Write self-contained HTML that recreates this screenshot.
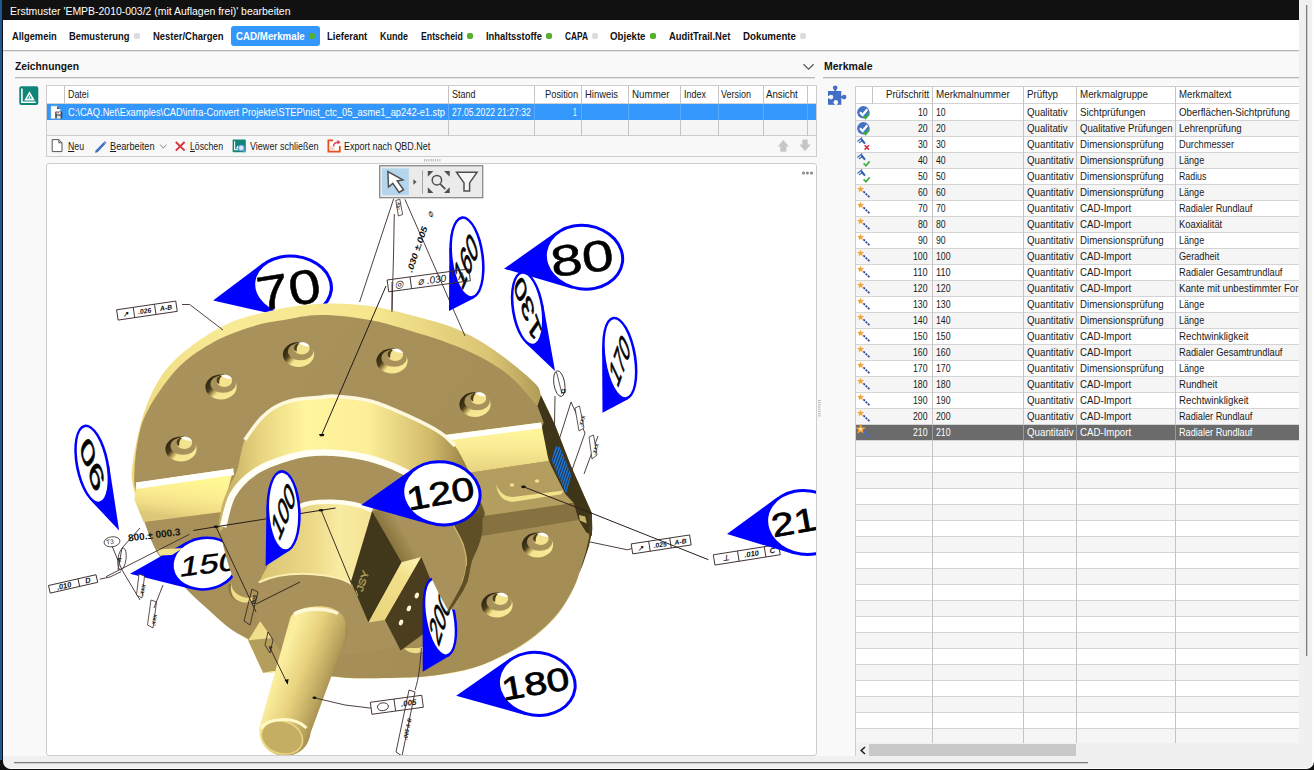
<!DOCTYPE html>
<html lang="de"><head><meta charset="utf-8"><title>Erstmuster bearbeiten</title>
<style>
html,body{margin:0;padding:0}
body{width:1314px;height:770px;overflow:hidden;position:relative;background:#101010;font-family:"Liberation Sans",sans-serif;font-size:11px;}
div,span,svg{position:absolute;box-sizing:border-box}
.t{white-space:nowrap;line-height:16px;transform-origin:0 0;display:block}
.t u{text-decoration:underline;text-underline-offset:1px}
#win{left:3px;top:0;width:1296px;height:756px;background:#f9f9f9;overflow:hidden}
.hl{height:1px;background:#d4d4d4}
.vl{width:1px;background:#c4c4c4}
.dot{width:6px;height:6px;border-radius:2px}
.dg{background:#55b02b}
.dgr{background:#dcdcdc}
</style></head><body>

<!-- outer frame -->
<div style="left:0;top:0;width:2px;height:760px;background:#1d5a93"></div>
<div style="left:3px;top:0;width:1311px;height:769px;background:#f0f0f0;border-right:2px solid #fdfdfd;border-bottom:1px solid #fdfdfd;border-radius:0 0 8px 8px"></div>
<div style="left:1306px;top:5px;width:1px;height:651px;background:#7a7a7a"></div>
<div style="left:1307px;top:5px;width:1px;height:651px;background:#cfcfcf"></div>
<div style="left:14px;top:762px;width:1074px;height:1px;background:#7a7a7a"></div>
<div style="left:14px;top:763px;width:1074px;height:1px;background:#cfcfcf"></div>
<div id="win">
  <div style="left:0;top:0;width:1296px;height:20px;background:#111111"></div>
  <div style="left:0;top:20px;width:1296px;height:30px;background:#ffffff"></div>
  <div style="left:0;top:50px;width:1296px;height:1px;background:#b4b4b4"></div>
  <div style="left:0;top:51px;width:1296px;height:1px;background:#e6e6e6"></div>
  <!-- active tab -->
  <div style="left:228px;top:26px;width:89px;height:20px;background:#3397fb;border-radius:3px"></div>
  <!-- section lines -->
  <div style="left:12px;top:77px;width:800px;height:1px;background:#b8b8b8"></div>
  <div style="left:12px;top:78px;width:800px;height:1px;background:#e4e4e4"></div>
  <div style="left:820px;top:77px;width:480px;height:1px;background:#b8b8b8"></div>
  <div style="left:820px;top:78px;width:480px;height:1px;background:#e4e4e4"></div>
  <!-- left grid -->
  <div style="left:43px;top:85px;width:771px;height:72px;background:#f8f8f8;border:1px solid #cdcdcd"></div>
  <div style="left:44px;top:86px;width:769px;height:18px;background:#ffffff"></div>
  <div style="left:44px;top:104px;width:769px;height:16px;background:#3397fb"></div>
  <div style="left:44px;top:120px;width:769px;height:15px;background:#f5f5f5"></div>
  <div class="hl" style="left:44px;top:103px;width:769px"></div>
  <div class="hl" style="left:44px;top:135px;width:769px;background:#cdcdcd"></div>
  <!-- left grid col seps -->
  <div class="vl" style="left:61px;top:86px;height:18px"></div>
  <div class="vl" style="left:445px;top:86px;height:50px"></div>
  <div class="vl" style="left:531px;top:86px;height:50px"></div>
  <div class="vl" style="left:578px;top:86px;height:50px"></div>
  <div class="vl" style="left:625px;top:86px;height:50px"></div>
  <div class="vl" style="left:677px;top:86px;height:50px"></div>
  <div class="vl" style="left:715px;top:86px;height:50px"></div>
  <div class="vl" style="left:760px;top:86px;height:50px"></div>
  <div class="vl" style="left:804px;top:86px;height:50px"></div>
  <div style="left:445px;top:104px;width:1px;height:16px;background:#5aaafc"></div>
  <div style="left:531px;top:104px;width:1px;height:16px;background:#5aaafc"></div>
  <div style="left:578px;top:104px;width:1px;height:16px;background:#5aaafc"></div>
  <div style="left:625px;top:104px;width:1px;height:16px;background:#5aaafc"></div>
  <div style="left:677px;top:104px;width:1px;height:16px;background:#5aaafc"></div>
  <div style="left:715px;top:104px;width:1px;height:16px;background:#5aaafc"></div>
  <div style="left:760px;top:104px;width:1px;height:16px;background:#5aaafc"></div>
  <div style="left:804px;top:104px;width:1px;height:16px;background:#5aaafc"></div>
  <!-- viewer panel -->
  <div style="left:43px;top:163px;width:771px;height:593px;background:#ffffff;border:1px solid #cdcdcd;border-radius:3px"></div>
  <!-- right table -->
  <div id="rt" style="left:852px;top:86px;width:444px;height:670px;background:#ffffff;border-left:1px solid #cdcdcd;border-top:1px solid #cdcdcd;overflow:hidden">
<div style="left:0;top:34px;width:444px;height:15px;background:#f5f5f5"></div>
<div style="left:0;top:66px;width:444px;height:15px;background:#f5f5f5"></div>
<div style="left:0;top:98px;width:444px;height:15px;background:#f5f5f5"></div>
<div style="left:0;top:130px;width:444px;height:15px;background:#f5f5f5"></div>
<div style="left:0;top:162px;width:444px;height:15px;background:#f5f5f5"></div>
<div style="left:0;top:194px;width:444px;height:15px;background:#f5f5f5"></div>
<div style="left:0;top:226px;width:444px;height:15px;background:#f5f5f5"></div>
<div style="left:0;top:258px;width:444px;height:15px;background:#f5f5f5"></div>
<div style="left:0;top:290px;width:444px;height:15px;background:#f5f5f5"></div>
<div style="left:0;top:322px;width:444px;height:15px;background:#f5f5f5"></div>
<div style="left:0;top:338px;width:444px;height:15px;background:#6b6b6b"></div>
<div style="left:0;top:354px;width:444px;height:15px;background:#f5f5f5"></div>
<div style="left:0;top:386px;width:444px;height:15px;background:#f5f5f5"></div>
<div style="left:0;top:418px;width:444px;height:15px;background:#f5f5f5"></div>
<div style="left:0;top:450px;width:444px;height:15px;background:#f5f5f5"></div>
<div style="left:0;top:482px;width:444px;height:15px;background:#f5f5f5"></div>
<div style="left:0;top:514px;width:444px;height:15px;background:#f5f5f5"></div>
<div style="left:0;top:546px;width:444px;height:15px;background:#f5f5f5"></div>
<div style="left:0;top:578px;width:444px;height:15px;background:#f5f5f5"></div>
<div style="left:0;top:610px;width:444px;height:15px;background:#f5f5f5"></div>
<div style="left:0;top:642px;width:444px;height:15px;background:#f5f5f5"></div>
<div class="hl" style="left:0;top:16px;width:444px"></div>
<div class="hl" style="left:0;top:33px;width:444px"></div>
<div class="hl" style="left:0;top:49px;width:444px"></div>
<div class="hl" style="left:0;top:65px;width:444px"></div>
<div class="hl" style="left:0;top:81px;width:444px"></div>
<div class="hl" style="left:0;top:97px;width:444px"></div>
<div class="hl" style="left:0;top:113px;width:444px"></div>
<div class="hl" style="left:0;top:129px;width:444px"></div>
<div class="hl" style="left:0;top:145px;width:444px"></div>
<div class="hl" style="left:0;top:161px;width:444px"></div>
<div class="hl" style="left:0;top:177px;width:444px"></div>
<div class="hl" style="left:0;top:193px;width:444px"></div>
<div class="hl" style="left:0;top:209px;width:444px"></div>
<div class="hl" style="left:0;top:225px;width:444px"></div>
<div class="hl" style="left:0;top:241px;width:444px"></div>
<div class="hl" style="left:0;top:257px;width:444px"></div>
<div class="hl" style="left:0;top:273px;width:444px"></div>
<div class="hl" style="left:0;top:289px;width:444px"></div>
<div class="hl" style="left:0;top:305px;width:444px"></div>
<div class="hl" style="left:0;top:321px;width:444px"></div>
<div class="hl" style="left:0;top:337px;width:444px"></div>
<div class="hl" style="left:0;top:353px;width:444px"></div>
<div class="hl" style="left:0;top:369px;width:444px"></div>
<div class="hl" style="left:0;top:385px;width:444px"></div>
<div class="hl" style="left:0;top:401px;width:444px"></div>
<div class="hl" style="left:0;top:417px;width:444px"></div>
<div class="hl" style="left:0;top:433px;width:444px"></div>
<div class="hl" style="left:0;top:449px;width:444px"></div>
<div class="hl" style="left:0;top:465px;width:444px"></div>
<div class="hl" style="left:0;top:481px;width:444px"></div>
<div class="hl" style="left:0;top:497px;width:444px"></div>
<div class="hl" style="left:0;top:513px;width:444px"></div>
<div class="hl" style="left:0;top:529px;width:444px"></div>
<div class="hl" style="left:0;top:545px;width:444px"></div>
<div class="hl" style="left:0;top:561px;width:444px"></div>
<div class="hl" style="left:0;top:577px;width:444px"></div>
<div class="hl" style="left:0;top:593px;width:444px"></div>
<div class="hl" style="left:0;top:609px;width:444px"></div>
<div class="hl" style="left:0;top:625px;width:444px"></div>
<div class="hl" style="left:0;top:641px;width:444px"></div>
<div class="vl" style="left:16px;top:0;height:17px"></div>
<div class="vl" style="left:76px;top:0;height:656px"></div>
<div style="left:76px;top:338px;width:1px;height:15px;background:#9a9a9a"></div>
<div class="vl" style="left:167px;top:0;height:656px"></div>
<div style="left:167px;top:338px;width:1px;height:15px;background:#9a9a9a"></div>
<div class="vl" style="left:220px;top:0;height:656px"></div>
<div style="left:220px;top:338px;width:1px;height:15px;background:#9a9a9a"></div>
<div class="vl" style="left:319px;top:0;height:656px"></div>
<div style="left:319px;top:338px;width:1px;height:15px;background:#9a9a9a"></div>
<div style="left:0;top:656px;width:444px;height:14px;background:#f0f0f0"></div>
<div style="left:13px;top:657px;width:207px;height:12px;background:#c9c9c9"></div>
<svg style="left:3px;top:659px" width="8" height="9" viewBox="0 0 8 9"><path d="M6 1 L2.2 4.5 L6 8" fill="none" stroke="#222" stroke-width="1.6"/></svg>
  </div>
</div>

<div id="txt" style="left:0;top:0;width:1299px;height:770px;overflow:hidden">
<span class="t" style="left:10.0px;top:3.02px;font-size:11.5px;color:#ffffff;transform:scaleX(0.9088);">Erstmuster &#x27;EMPB-2010-003/2 (mit Auflagen frei)&#x27; bearbeiten</span>
<span class="t" style="left:12.0px;top:27.86px;font-size:10.8px;color:#111111;font-weight:700;transform:scaleX(0.8661);">Allgemein</span>
<span class="t" style="left:69.0px;top:27.86px;font-size:10.8px;color:#111111;font-weight:700;transform:scaleX(0.8693);">Bemusterung</span>
<span class="t" style="left:152.5px;top:27.86px;font-size:10.8px;color:#111111;font-weight:700;transform:scaleX(0.8768);">Nester/Chargen</span>
<span class="t" style="left:235.7px;top:27.86px;font-size:10.8px;color:#ffffff;font-weight:700;transform:scaleX(0.9027);">CAD/Merkmale</span>
<span class="t" style="left:326.7px;top:27.86px;font-size:10.8px;color:#111111;font-weight:700;transform:scaleX(0.8836);">Lieferant</span>
<span class="t" style="left:380.0px;top:27.86px;font-size:10.8px;color:#111111;font-weight:700;transform:scaleX(0.8335);">Kunde</span>
<span class="t" style="left:420.7px;top:27.86px;font-size:10.8px;color:#111111;font-weight:700;transform:scaleX(0.8099);">Entscheid</span>
<span class="t" style="left:485.7px;top:27.86px;font-size:10.8px;color:#111111;font-weight:700;transform:scaleX(0.8724);">Inhaltsstoffe</span>
<span class="t" style="left:564.5px;top:27.86px;font-size:10.8px;color:#111111;font-weight:700;transform:scaleX(0.7719);">CAPA</span>
<span class="t" style="left:610.0px;top:27.86px;font-size:10.8px;color:#111111;font-weight:700;transform:scaleX(0.8963);">Objekte</span>
<span class="t" style="left:668.7px;top:27.86px;font-size:10.8px;color:#111111;font-weight:700;transform:scaleX(0.8734);">AuditTrail.Net</span>
<span class="t" style="left:742.5px;top:27.86px;font-size:10.8px;color:#111111;font-weight:700;transform:scaleX(0.9014);">Dokumente</span>
<span class="t" style="left:15.0px;top:58.18px;font-size:11.6px;color:#111111;font-weight:700;transform:scaleX(0.8872);">Zeichnungen</span>
<span class="t" style="left:824.0px;top:58.18px;font-size:11.6px;color:#111111;font-weight:700;transform:scaleX(0.9065);">Merkmale</span>
<span class="t" style="left:68.0px;top:86.49px;font-size:11px;color:#1a1a1a;transform:scaleX(0.8058);">Datei</span>
<span class="t" style="left:452.0px;top:86.49px;font-size:11px;color:#1a1a1a;transform:scaleX(0.8174);">Stand</span>
<span class="t" style="left:545.0px;top:86.49px;font-size:11px;color:#1a1a1a;transform:scaleX(0.8482);">Position</span>
<span class="t" style="left:585.0px;top:86.49px;font-size:11px;color:#1a1a1a;transform:scaleX(0.8568);">Hinweis</span>
<span class="t" style="left:632.0px;top:86.49px;font-size:11px;color:#1a1a1a;transform:scaleX(0.8892);">Nummer</span>
<span class="t" style="left:683.7px;top:86.49px;font-size:11px;color:#1a1a1a;transform:scaleX(0.8172);">Index</span>
<span class="t" style="left:721.2px;top:86.49px;font-size:11px;color:#1a1a1a;transform:scaleX(0.8174);">Version</span>
<span class="t" style="left:766.2px;top:86.49px;font-size:11px;color:#1a1a1a;transform:scaleX(0.8814);">Ansicht</span>
<span class="t" style="left:68.0px;top:103.99px;font-size:11px;color:#ffffff;transform:scaleX(0.8459);">C:\CAQ.Net\Examples\CAD\infra-Convert Projekte\STEP\nist_ctc_05_asme1_ap242-e1.stp</span>
<span class="t" style="left:452.0px;top:103.99px;font-size:11px;color:#ffffff;transform:scaleX(0.7797);">27.05.2022 21:27:32</span>
<span class="t" style="left:572.5px;top:103.99px;font-size:11px;color:#ffffff;transform:scaleX(0.6041);">1</span>
<span class="t" style="left:68.0px;top:138.39px;font-size:11px;color:#1a1a1a;transform:scaleX(0.7920);"><u>N</u>eu</span>
<span class="t" style="left:110.0px;top:138.39px;font-size:11px;color:#1a1a1a;transform:scaleX(0.8362);"><u>B</u>earbeiten</span>
<span class="t" style="left:190.0px;top:138.39px;font-size:11px;color:#1a1a1a;transform:scaleX(0.7931);"><u>L</u>öschen</span>
<span class="t" style="left:249.5px;top:138.39px;font-size:11px;color:#1a1a1a;transform:scaleX(0.8197);">Viewer schließen</span>
<span class="t" style="left:343.7px;top:138.39px;font-size:11px;color:#1a1a1a;transform:scaleX(0.8158);">Export nach QBD.Net</span>
<span class="t" style="left:886.2px;top:86.49px;font-size:11px;color:#1a1a1a;transform:scaleX(0.8745);">Prüfschritt</span>
<span class="t" style="left:936.2px;top:86.49px;font-size:11px;color:#1a1a1a;transform:scaleX(0.8944);">Merkmalnummer</span>
<span class="t" style="left:1026.5px;top:86.49px;font-size:11px;color:#1a1a1a;transform:scaleX(0.8893);">Prüftyp</span>
<span class="t" style="left:1080.0px;top:86.49px;font-size:11px;color:#1a1a1a;transform:scaleX(0.8898);">Merkmalgruppe</span>
<span class="t" style="left:1179.0px;top:86.49px;font-size:11px;color:#1a1a1a;transform:scaleX(0.8764);">Merkmaltext</span>
<span class="t" style="left:918.3px;top:103.99px;font-size:11px;color:#1a1a1a;transform:scaleX(0.7918);">10</span>
<span class="t" style="left:935.8px;top:103.99px;font-size:11px;color:#1a1a1a;transform:scaleX(0.7918);">10</span>
<span class="t" style="left:1026.5px;top:103.99px;font-size:11px;color:#1a1a1a;transform:scaleX(0.8831);">Qualitativ</span>
<span class="t" style="left:1080.0px;top:103.99px;font-size:11px;color:#1a1a1a;transform:scaleX(0.8851);">Sichtprüfungen</span>
<span class="t" style="left:1179.0px;top:103.99px;font-size:11px;color:#1a1a1a;transform:scaleX(0.8855);">Oberflächen-Sichtprüfung</span>
<span class="t" style="left:918.3px;top:119.79px;font-size:11px;color:#1a1a1a;transform:scaleX(0.7918);">20</span>
<span class="t" style="left:935.8px;top:119.79px;font-size:11px;color:#1a1a1a;transform:scaleX(0.7918);">20</span>
<span class="t" style="left:1026.5px;top:119.79px;font-size:11px;color:#1a1a1a;transform:scaleX(0.8831);">Qualitativ</span>
<span class="t" style="left:1080.0px;top:119.79px;font-size:11px;color:#1a1a1a;transform:scaleX(0.8743);">Qualitative Prüfungen</span>
<span class="t" style="left:1179.0px;top:119.79px;font-size:11px;color:#1a1a1a;transform:scaleX(0.8762);">Lehrenprüfung</span>
<span class="t" style="left:918.3px;top:135.79px;font-size:11px;color:#1a1a1a;transform:scaleX(0.7918);">30</span>
<span class="t" style="left:935.8px;top:135.79px;font-size:11px;color:#1a1a1a;transform:scaleX(0.7918);">30</span>
<span class="t" style="left:1026.5px;top:135.79px;font-size:11px;color:#1a1a1a;transform:scaleX(0.8841);">Quantitativ</span>
<span class="t" style="left:1080.0px;top:135.79px;font-size:11px;color:#1a1a1a;transform:scaleX(0.8831);">Dimensionsprüfung</span>
<span class="t" style="left:1179.0px;top:135.79px;font-size:11px;color:#1a1a1a;transform:scaleX(0.8409);">Durchmesser</span>
<span class="t" style="left:918.3px;top:151.79px;font-size:11px;color:#1a1a1a;transform:scaleX(0.7918);">40</span>
<span class="t" style="left:935.8px;top:151.79px;font-size:11px;color:#1a1a1a;transform:scaleX(0.7918);">40</span>
<span class="t" style="left:1026.5px;top:151.79px;font-size:11px;color:#1a1a1a;transform:scaleX(0.8841);">Quantitativ</span>
<span class="t" style="left:1080.0px;top:151.79px;font-size:11px;color:#1a1a1a;transform:scaleX(0.8831);">Dimensionsprüfung</span>
<span class="t" style="left:1179.0px;top:151.79px;font-size:11px;color:#1a1a1a;transform:scaleX(0.8237);">Länge</span>
<span class="t" style="left:918.3px;top:167.79px;font-size:11px;color:#1a1a1a;transform:scaleX(0.7918);">50</span>
<span class="t" style="left:935.8px;top:167.79px;font-size:11px;color:#1a1a1a;transform:scaleX(0.7918);">50</span>
<span class="t" style="left:1026.5px;top:167.79px;font-size:11px;color:#1a1a1a;transform:scaleX(0.8841);">Quantitativ</span>
<span class="t" style="left:1080.0px;top:167.79px;font-size:11px;color:#1a1a1a;transform:scaleX(0.8831);">Dimensionsprüfung</span>
<span class="t" style="left:1179.0px;top:167.79px;font-size:11px;color:#1a1a1a;transform:scaleX(0.8000);">Radius</span>
<span class="t" style="left:918.3px;top:183.79px;font-size:11px;color:#1a1a1a;transform:scaleX(0.7918);">60</span>
<span class="t" style="left:935.8px;top:183.79px;font-size:11px;color:#1a1a1a;transform:scaleX(0.7918);">60</span>
<span class="t" style="left:1026.5px;top:183.79px;font-size:11px;color:#1a1a1a;transform:scaleX(0.8841);">Quantitativ</span>
<span class="t" style="left:1080.0px;top:183.79px;font-size:11px;color:#1a1a1a;transform:scaleX(0.8831);">Dimensionsprüfung</span>
<span class="t" style="left:1179.0px;top:183.79px;font-size:11px;color:#1a1a1a;transform:scaleX(0.8237);">Länge</span>
<span class="t" style="left:918.3px;top:199.79px;font-size:11px;color:#1a1a1a;transform:scaleX(0.7918);">70</span>
<span class="t" style="left:935.8px;top:199.79px;font-size:11px;color:#1a1a1a;transform:scaleX(0.7918);">70</span>
<span class="t" style="left:1026.5px;top:199.79px;font-size:11px;color:#1a1a1a;transform:scaleX(0.8841);">Quantitativ</span>
<span class="t" style="left:1080.0px;top:199.79px;font-size:11px;color:#1a1a1a;transform:scaleX(0.8801);">CAD-Import</span>
<span class="t" style="left:1179.0px;top:199.79px;font-size:11px;color:#1a1a1a;transform:scaleX(0.8324);">Radialer Rundlauf</span>
<span class="t" style="left:918.3px;top:215.79px;font-size:11px;color:#1a1a1a;transform:scaleX(0.7918);">80</span>
<span class="t" style="left:935.8px;top:215.79px;font-size:11px;color:#1a1a1a;transform:scaleX(0.7918);">80</span>
<span class="t" style="left:1026.5px;top:215.79px;font-size:11px;color:#1a1a1a;transform:scaleX(0.8841);">Quantitativ</span>
<span class="t" style="left:1080.0px;top:215.79px;font-size:11px;color:#1a1a1a;transform:scaleX(0.8801);">CAD-Import</span>
<span class="t" style="left:1179.0px;top:215.79px;font-size:11px;color:#1a1a1a;transform:scaleX(0.8510);">Koaxialität</span>
<span class="t" style="left:918.3px;top:231.79px;font-size:11px;color:#1a1a1a;transform:scaleX(0.7918);">90</span>
<span class="t" style="left:935.8px;top:231.79px;font-size:11px;color:#1a1a1a;transform:scaleX(0.7918);">90</span>
<span class="t" style="left:1026.5px;top:231.79px;font-size:11px;color:#1a1a1a;transform:scaleX(0.8841);">Quantitativ</span>
<span class="t" style="left:1080.0px;top:231.79px;font-size:11px;color:#1a1a1a;transform:scaleX(0.8831);">Dimensionsprüfung</span>
<span class="t" style="left:1179.0px;top:231.79px;font-size:11px;color:#1a1a1a;transform:scaleX(0.8237);">Länge</span>
<span class="t" style="left:913.4px;top:247.79px;font-size:11px;color:#1a1a1a;transform:scaleX(0.7952);">100</span>
<span class="t" style="left:935.8px;top:247.79px;font-size:11px;color:#1a1a1a;transform:scaleX(0.7952);">100</span>
<span class="t" style="left:1026.5px;top:247.79px;font-size:11px;color:#1a1a1a;transform:scaleX(0.8841);">Quantitativ</span>
<span class="t" style="left:1080.0px;top:247.79px;font-size:11px;color:#1a1a1a;transform:scaleX(0.8801);">CAD-Import</span>
<span class="t" style="left:1179.0px;top:247.79px;font-size:11px;color:#1a1a1a;transform:scaleX(0.8321);">Geradheit</span>
<span class="t" style="left:913.4px;top:263.79px;font-size:11px;color:#1a1a1a;transform:scaleX(0.8321);">110</span>
<span class="t" style="left:935.8px;top:263.79px;font-size:11px;color:#1a1a1a;transform:scaleX(0.8321);">110</span>
<span class="t" style="left:1026.5px;top:263.79px;font-size:11px;color:#1a1a1a;transform:scaleX(0.8841);">Quantitativ</span>
<span class="t" style="left:1080.0px;top:263.79px;font-size:11px;color:#1a1a1a;transform:scaleX(0.8801);">CAD-Import</span>
<span class="t" style="left:1179.0px;top:263.79px;font-size:11px;color:#1a1a1a;transform:scaleX(0.8455);">Radialer Gesamtrundlauf</span>
<span class="t" style="left:913.4px;top:279.79px;font-size:11px;color:#1a1a1a;transform:scaleX(0.7952);">120</span>
<span class="t" style="left:935.8px;top:279.79px;font-size:11px;color:#1a1a1a;transform:scaleX(0.7952);">120</span>
<span class="t" style="left:1026.5px;top:279.79px;font-size:11px;color:#1a1a1a;transform:scaleX(0.8841);">Quantitativ</span>
<span class="t" style="left:1080.0px;top:279.79px;font-size:11px;color:#1a1a1a;transform:scaleX(0.8801);">CAD-Import</span>
<span class="t" style="left:1179.0px;top:279.79px;font-size:11px;color:#1a1a1a;transform:scaleX(0.8801);">Kante mit unbestimmter Form</span>
<span class="t" style="left:913.4px;top:295.79px;font-size:11px;color:#1a1a1a;transform:scaleX(0.7952);">130</span>
<span class="t" style="left:935.8px;top:295.79px;font-size:11px;color:#1a1a1a;transform:scaleX(0.7952);">130</span>
<span class="t" style="left:1026.5px;top:295.79px;font-size:11px;color:#1a1a1a;transform:scaleX(0.8841);">Quantitativ</span>
<span class="t" style="left:1080.0px;top:295.79px;font-size:11px;color:#1a1a1a;transform:scaleX(0.8831);">Dimensionsprüfung</span>
<span class="t" style="left:1179.0px;top:295.79px;font-size:11px;color:#1a1a1a;transform:scaleX(0.8237);">Länge</span>
<span class="t" style="left:913.4px;top:311.79px;font-size:11px;color:#1a1a1a;transform:scaleX(0.7952);">140</span>
<span class="t" style="left:935.8px;top:311.79px;font-size:11px;color:#1a1a1a;transform:scaleX(0.7952);">140</span>
<span class="t" style="left:1026.5px;top:311.79px;font-size:11px;color:#1a1a1a;transform:scaleX(0.8841);">Quantitativ</span>
<span class="t" style="left:1080.0px;top:311.79px;font-size:11px;color:#1a1a1a;transform:scaleX(0.8831);">Dimensionsprüfung</span>
<span class="t" style="left:1179.0px;top:311.79px;font-size:11px;color:#1a1a1a;transform:scaleX(0.8237);">Länge</span>
<span class="t" style="left:913.4px;top:327.79px;font-size:11px;color:#1a1a1a;transform:scaleX(0.7952);">150</span>
<span class="t" style="left:935.8px;top:327.79px;font-size:11px;color:#1a1a1a;transform:scaleX(0.7952);">150</span>
<span class="t" style="left:1026.5px;top:327.79px;font-size:11px;color:#1a1a1a;transform:scaleX(0.8841);">Quantitativ</span>
<span class="t" style="left:1080.0px;top:327.79px;font-size:11px;color:#1a1a1a;transform:scaleX(0.8801);">CAD-Import</span>
<span class="t" style="left:1179.0px;top:327.79px;font-size:11px;color:#1a1a1a;transform:scaleX(0.8811);">Rechtwinkligkeit</span>
<span class="t" style="left:913.4px;top:343.79px;font-size:11px;color:#1a1a1a;transform:scaleX(0.7952);">160</span>
<span class="t" style="left:935.8px;top:343.79px;font-size:11px;color:#1a1a1a;transform:scaleX(0.7952);">160</span>
<span class="t" style="left:1026.5px;top:343.79px;font-size:11px;color:#1a1a1a;transform:scaleX(0.8841);">Quantitativ</span>
<span class="t" style="left:1080.0px;top:343.79px;font-size:11px;color:#1a1a1a;transform:scaleX(0.8801);">CAD-Import</span>
<span class="t" style="left:1179.0px;top:343.79px;font-size:11px;color:#1a1a1a;transform:scaleX(0.8455);">Radialer Gesamtrundlauf</span>
<span class="t" style="left:913.4px;top:359.79px;font-size:11px;color:#1a1a1a;transform:scaleX(0.7952);">170</span>
<span class="t" style="left:935.8px;top:359.79px;font-size:11px;color:#1a1a1a;transform:scaleX(0.7952);">170</span>
<span class="t" style="left:1026.5px;top:359.79px;font-size:11px;color:#1a1a1a;transform:scaleX(0.8841);">Quantitativ</span>
<span class="t" style="left:1080.0px;top:359.79px;font-size:11px;color:#1a1a1a;transform:scaleX(0.8831);">Dimensionsprüfung</span>
<span class="t" style="left:1179.0px;top:359.79px;font-size:11px;color:#1a1a1a;transform:scaleX(0.8237);">Länge</span>
<span class="t" style="left:913.4px;top:375.79px;font-size:11px;color:#1a1a1a;transform:scaleX(0.7952);">180</span>
<span class="t" style="left:935.8px;top:375.79px;font-size:11px;color:#1a1a1a;transform:scaleX(0.7952);">180</span>
<span class="t" style="left:1026.5px;top:375.79px;font-size:11px;color:#1a1a1a;transform:scaleX(0.8841);">Quantitativ</span>
<span class="t" style="left:1080.0px;top:375.79px;font-size:11px;color:#1a1a1a;transform:scaleX(0.8801);">CAD-Import</span>
<span class="t" style="left:1179.0px;top:375.79px;font-size:11px;color:#1a1a1a;transform:scaleX(0.8695);">Rundheit</span>
<span class="t" style="left:913.4px;top:391.79px;font-size:11px;color:#1a1a1a;transform:scaleX(0.7952);">190</span>
<span class="t" style="left:935.8px;top:391.79px;font-size:11px;color:#1a1a1a;transform:scaleX(0.7952);">190</span>
<span class="t" style="left:1026.5px;top:391.79px;font-size:11px;color:#1a1a1a;transform:scaleX(0.8841);">Quantitativ</span>
<span class="t" style="left:1080.0px;top:391.79px;font-size:11px;color:#1a1a1a;transform:scaleX(0.8801);">CAD-Import</span>
<span class="t" style="left:1179.0px;top:391.79px;font-size:11px;color:#1a1a1a;transform:scaleX(0.8811);">Rechtwinkligkeit</span>
<span class="t" style="left:913.4px;top:407.79px;font-size:11px;color:#1a1a1a;transform:scaleX(0.7952);">200</span>
<span class="t" style="left:935.8px;top:407.79px;font-size:11px;color:#1a1a1a;transform:scaleX(0.7952);">200</span>
<span class="t" style="left:1026.5px;top:407.79px;font-size:11px;color:#1a1a1a;transform:scaleX(0.8841);">Quantitativ</span>
<span class="t" style="left:1080.0px;top:407.79px;font-size:11px;color:#1a1a1a;transform:scaleX(0.8801);">CAD-Import</span>
<span class="t" style="left:1179.0px;top:407.79px;font-size:11px;color:#1a1a1a;transform:scaleX(0.8324);">Radialer Rundlauf</span>
<span class="t" style="left:913.4px;top:423.79px;font-size:11px;color:#ffffff;transform:scaleX(0.7952);">210</span>
<span class="t" style="left:935.8px;top:423.79px;font-size:11px;color:#ffffff;transform:scaleX(0.7952);">210</span>
<span class="t" style="left:1026.5px;top:423.79px;font-size:11px;color:#ffffff;transform:scaleX(0.8841);">Quantitativ</span>
<span class="t" style="left:1080.0px;top:423.79px;font-size:11px;color:#ffffff;transform:scaleX(0.8801);">CAD-Import</span>
<span class="t" style="left:1179.0px;top:423.79px;font-size:11px;color:#ffffff;transform:scaleX(0.8324);">Radialer Rundlauf</span>
</div>
<div class="dot dgr" style="left:134px;top:33px"></div>
<div class="dot dg" style="left:308.5px;top:33px"></div>
<div class="dot dg" style="left:467px;top:33px"></div>
<div class="dot dg" style="left:546px;top:33px"></div>
<div class="dot dgr" style="left:592px;top:33px"></div>
<div class="dot dg" style="left:650px;top:33px"></div>
<div class="dot dgr" style="left:800px;top:33px"></div>
<svg style="left:802px;top:62px" width="14" height="10" viewBox="0 0 14 10"><path d="M1.5 2.2 L6.6 7.2 L11.7 2.2" fill="none" stroke="#555" stroke-width="1.2"/></svg>
<svg style="left:19px;top:85.5px" width="20" height="20" viewBox="0 0 20 20"><rect x="0.3" y="0.3" width="19" height="18.8" rx="2" fill="#0f8578"/><path d="M2.9 2.5 V16.3 H16.8" fill="none" stroke="#fff" stroke-width="1.6"/><path d="M10.5 5.2 L15.8 14.4 H5.2Z" fill="#fff"/><path d="M10.5 8.6 L12.9 12.8 H8.1Z" fill="#0f8578"/><path d="M10.5 10 V12.5 M9.3 12 L11.7 12" stroke="#fff" stroke-width="0.8"/></svg>
<svg style="left:826px;top:84px" width="22" height="22" viewBox="826 84 22 22"><rect x="828" y="91" width="13.3" height="13.8" fill="#416fc6"/><circle cx="835.2" cy="87.7" r="2.3" fill="#416fc6"/><rect x="834.3" y="88.5" width="1.9" height="3" fill="#416fc6"/><circle cx="844.1" cy="97.1" r="2.3" fill="#416fc6"/><rect x="841" y="96.2" width="2.5" height="1.9" fill="#416fc6"/><circle cx="831" cy="97.1" r="2.3" fill="#f9f9f9"/><rect x="827.8" y="96" width="2.2" height="2.2" fill="#f9f9f9"/><circle cx="835.8" cy="102.3" r="2.3" fill="#f9f9f9"/><rect x="834.9" y="103.4" width="1.9" height="1.6" fill="#f9f9f9"/></svg>
<svg style="left:49px;top:105px" width="15" height="15" viewBox="0 0 15 15"><path d="M2 1 H8 L11.2 4 V13.6 H2Z" fill="#fff" stroke="#c9c0b0" stroke-width="0.6"/><path d="M8 1 L11.2 4 H8Z" fill="#555"/><rect x="6.2" y="6.6" width="7" height="7" rx="0.8" fill="#3c4650"/><rect x="7.6" y="6.8" width="4" height="2.6" fill="#fff"/><rect x="8" y="7.3" width="2.4" height="1" fill="#d33"/><rect x="7.8" y="10.6" width="3.8" height="3" fill="#e8e8e8"/></svg>
<svg style="left:50px;top:138px" width="15" height="15" viewBox="0 0 15 15"><path d="M2.2 1.6 H8.8 L12 4.8 V13.6 H2.2Z" fill="#fff" stroke="#555" stroke-width="1"/><path d="M8.8 1.6 V4.8 H12" fill="none" stroke="#555" stroke-width="1"/></svg>
<svg style="left:93px;top:139px" width="15" height="14" viewBox="0 0 15 14"><path d="M2.6 11.6 L10.6 3.2 L12.4 5 L4.6 13.2 L2 13.8Z" fill="#4472c4"/><path d="M10.6 3.2 L11.8 2 L13.6 3.8 L12.4 5Z" fill="#6a8fd8"/></svg>
<svg style="left:159px;top:143px" width="10" height="8" viewBox="0 0 10 8"><path d="M1.2 1.6 L4.2 5.2 L7.4 1.6" fill="none" stroke="#8a8a8a" stroke-width="1"/></svg>
<svg style="left:174px;top:139.5px" width="13" height="13" viewBox="0 0 13 13"><path d="M1.8 2 L10.6 10.6 M10.6 2 L1.8 10.6" stroke="#d8353d" stroke-width="1.9" fill="none"/></svg>
<svg style="left:232px;top:138.5px" width="15" height="14" viewBox="0 0 15 14"><rect x="0.6" y="0.6" width="13.2" height="12.6" rx="1" fill="#0f8578"/><path d="M2.6 2.2 V10.8 H6" fill="none" stroke="#fff" stroke-width="1.1"/><path d="M4 9.5 L5.6 6.4 L7.2 9.5Z" fill="#fff"/><circle cx="9.3" cy="9" r="2.7" fill="#dbe8fb" stroke="#7aa7ee" stroke-width="1.1"/><path d="M11.3 11 L13.4 13.2" stroke="#7aa7ee" stroke-width="1.4"/></svg>
<svg style="left:326.5px;top:138px" width="15" height="15" viewBox="0 0 15 15"><rect x="1.4" y="2.4" width="11.4" height="11.2" fill="#fff" stroke="#e8501e" stroke-width="1.8"/><rect x="6" y="1" width="8" height="7" fill="#fff" opacity="0.95"/><path d="M6.4 8.4 C6.6 5.6 8.6 4.2 11.4 4.2" fill="none" stroke="#e0405a" stroke-width="1.4"/><path d="M10.4 1.8 L13.6 4.2 L10.4 6.6Z" fill="#e0405a"/><rect x="3" y="8.4" width="4.4" height="4" fill="#fbd3c5"/></svg>
<svg style="left:776px;top:138px" width="36" height="16" viewBox="0 0 36 16"><path d="M7.3 1.9 L13 8.4 H10.4 V13.7 H4.3 V8.4 H1.6Z" fill="#c6c6c6"/><path d="M26.3 1.5 H31.7 V6.5 H34.7 L29 13.3 L23.3 6.5 H26.3Z" fill="#c6c6c6"/></svg>
<svg style="left:800px;top:170px" width="16" height="6" viewBox="0 0 16 6"><circle cx="3.5" cy="3" r="1.55" fill="#8c8c8c"/><circle cx="7.4" cy="3" r="1.55" fill="#8c8c8c"/><circle cx="11.5" cy="3" r="1.55" fill="#8c8c8c"/></svg>
<svg style="left:424px;top:158.8px" width="18" height="3" viewBox="0 0 18 3"><rect x="0.0" y="0" width="1" height="2.6" fill="#b4b4b4"/><rect x="2.2" y="0" width="1" height="2.6" fill="#b4b4b4"/><rect x="4.4" y="0" width="1" height="2.6" fill="#b4b4b4"/><rect x="6.6" y="0" width="1" height="2.6" fill="#b4b4b4"/><rect x="8.8" y="0" width="1" height="2.6" fill="#b4b4b4"/><rect x="11.0" y="0" width="1" height="2.6" fill="#b4b4b4"/><rect x="13.2" y="0" width="1" height="2.6" fill="#b4b4b4"/><rect x="15.4" y="0" width="1" height="2.6" fill="#b4b4b4"/></svg>
<svg style="left:817.5px;top:400px" width="3" height="18" viewBox="0 0 3 18"><rect x="0" y="0.0" width="2.6" height="1" fill="#b4b4b4"/><rect x="0" y="2.2" width="2.6" height="1" fill="#b4b4b4"/><rect x="0" y="4.4" width="2.6" height="1" fill="#b4b4b4"/><rect x="0" y="6.6" width="2.6" height="1" fill="#b4b4b4"/><rect x="0" y="8.8" width="2.6" height="1" fill="#b4b4b4"/><rect x="0" y="11.0" width="2.6" height="1" fill="#b4b4b4"/><rect x="0" y="13.2" width="2.6" height="1" fill="#b4b4b4"/><rect x="0" y="15.4" width="2.6" height="1" fill="#b4b4b4"/></svg>
<svg style="left:379.2px;top:165.2px" width="105" height="34" viewBox="0 0 105 34"><rect x="0.7" y="0.7" width="103" height="32" fill="#ebebeb" stroke="#8a8a8a" stroke-width="1.3"/><rect x="3" y="3.4" width="26.8" height="26.8" fill="#b4d5ec"/><path d="M8.9 6.6 L9.5 22 L13.8 18.4 L20.1 27.4 L24.5 24.7 L18.2 15.9 L23.8 14.9Z" fill="#fff" stroke="#4f4f4f" stroke-width="1.5" stroke-linejoin="miter"/><path d="M34.4 14.2 L37.6 17 L34.4 19.8Z" fill="#555"/><path d="M43.5 5.5 V29.2" stroke="#a6a6a6" stroke-width="1"/><path d="M48.8 6 H54.4 L48.8 11.7Z M70.7 6 V11.7 L65 6Z M48.8 27.9 V22.3 L54.4 27.9Z M70.7 27.9 H65 L70.7 22.3Z" fill="#4f4f4f"/><circle cx="57.9" cy="15.2" r="4.7" fill="none" stroke="#4f4f4f" stroke-width="1.5"/><path d="M61.3 19.1 L66.3 24.1" stroke="#4f4f4f" stroke-width="1.8"/><path d="M77.5 7.3 H98.1 L90.6 17.9 V26 H85 V17.9Z" fill="#f6f6f6" stroke="#4f4f4f" stroke-width="1.5"/></svg>
<svg style="left:856px;top:104px" width="16" height="16" viewBox="0 0 16 16"><circle cx="7.4" cy="8.3" r="6.2" fill="#4472c4"/><path d="M4 8.2 L6.6 11 L11.4 5.2" fill="none" stroke="#fff" stroke-width="2.2"/><path d="M7.4 12.2 L9.6 14.4 L13.4 9.6" fill="none" stroke="#3cb043" stroke-width="1.7"/></svg>
<svg style="left:856px;top:120px" width="16" height="16" viewBox="0 0 16 16"><circle cx="7.4" cy="8.3" r="6.2" fill="#4472c4"/><path d="M4 8.2 L6.6 11 L11.4 5.2" fill="none" stroke="#fff" stroke-width="2.2"/><path d="M7.4 12.2 L9.6 14.4 L13.4 9.6" fill="none" stroke="#3cb043" stroke-width="1.7"/></svg>
<svg style="left:856px;top:136px" width="16" height="16" viewBox="0 0 16 16"><path d="M1.4 5.4 L6.2 1.6 M3 7 L7 3.8 M6 3.4 L8.8 7.4 L5.6 4.6" stroke="#4472c4" stroke-width="1.3" fill="none"/><path d="M5.2 3.2 L9 7.6" stroke="#3a62b0" stroke-width="1.8"/><path d="M8.6 9.2 L13 13.6 M13 9.2 L8.6 13.6" stroke="#d8353d" stroke-width="1.6"/></svg>
<svg style="left:856px;top:152px" width="16" height="16" viewBox="0 0 16 16"><path d="M1.4 5.4 L6.2 1.6 M3 7 L7 3.8 M6 3.4 L8.8 7.4 L5.6 4.6" stroke="#4472c4" stroke-width="1.3" fill="none"/><path d="M5.2 3.2 L9 7.6" stroke="#3a62b0" stroke-width="1.8"/><path d="M7.6 11.4 L10 13.8 L13.6 9.4" fill="none" stroke="#3cb043" stroke-width="1.7"/></svg>
<svg style="left:856px;top:168px" width="16" height="16" viewBox="0 0 16 16"><path d="M1.4 5.4 L6.2 1.6 M3 7 L7 3.8 M6 3.4 L8.8 7.4 L5.6 4.6" stroke="#4472c4" stroke-width="1.3" fill="none"/><path d="M5.2 3.2 L9 7.6" stroke="#3a62b0" stroke-width="1.8"/><path d="M7.6 11.4 L10 13.8 L13.6 9.4" fill="none" stroke="#3cb043" stroke-width="1.7"/></svg>
<svg style="left:856px;top:184px" width="16" height="16" viewBox="0 0 16 16"><path d="M4.60 1.50 L5.54 3.91 L8.12 4.06 L6.12 5.69 L6.77 8.19 L4.60 6.80 L2.43 8.19 L3.08 5.69 L1.08 4.06 L3.66 3.91Z" fill="#f2a33a"/><path d="M7.4 7.4 L13.8 13.6" stroke="#2d4da0" stroke-width="1.7" stroke-dasharray="2.2 0.9"/></svg>
<svg style="left:856px;top:200px" width="16" height="16" viewBox="0 0 16 16"><path d="M4.60 1.50 L5.54 3.91 L8.12 4.06 L6.12 5.69 L6.77 8.19 L4.60 6.80 L2.43 8.19 L3.08 5.69 L1.08 4.06 L3.66 3.91Z" fill="#f2a33a"/><path d="M7.4 7.4 L13.8 13.6" stroke="#2d4da0" stroke-width="1.7" stroke-dasharray="2.2 0.9"/></svg>
<svg style="left:856px;top:216px" width="16" height="16" viewBox="0 0 16 16"><path d="M4.60 1.50 L5.54 3.91 L8.12 4.06 L6.12 5.69 L6.77 8.19 L4.60 6.80 L2.43 8.19 L3.08 5.69 L1.08 4.06 L3.66 3.91Z" fill="#f2a33a"/><path d="M7.4 7.4 L13.8 13.6" stroke="#2d4da0" stroke-width="1.7" stroke-dasharray="2.2 0.9"/></svg>
<svg style="left:856px;top:232px" width="16" height="16" viewBox="0 0 16 16"><path d="M4.60 1.50 L5.54 3.91 L8.12 4.06 L6.12 5.69 L6.77 8.19 L4.60 6.80 L2.43 8.19 L3.08 5.69 L1.08 4.06 L3.66 3.91Z" fill="#f2a33a"/><path d="M7.4 7.4 L13.8 13.6" stroke="#2d4da0" stroke-width="1.7" stroke-dasharray="2.2 0.9"/></svg>
<svg style="left:856px;top:248px" width="16" height="16" viewBox="0 0 16 16"><path d="M4.60 1.50 L5.54 3.91 L8.12 4.06 L6.12 5.69 L6.77 8.19 L4.60 6.80 L2.43 8.19 L3.08 5.69 L1.08 4.06 L3.66 3.91Z" fill="#f2a33a"/><path d="M7.4 7.4 L13.8 13.6" stroke="#2d4da0" stroke-width="1.7" stroke-dasharray="2.2 0.9"/></svg>
<svg style="left:856px;top:264px" width="16" height="16" viewBox="0 0 16 16"><path d="M4.60 1.50 L5.54 3.91 L8.12 4.06 L6.12 5.69 L6.77 8.19 L4.60 6.80 L2.43 8.19 L3.08 5.69 L1.08 4.06 L3.66 3.91Z" fill="#f2a33a"/><path d="M7.4 7.4 L13.8 13.6" stroke="#2d4da0" stroke-width="1.7" stroke-dasharray="2.2 0.9"/></svg>
<svg style="left:856px;top:280px" width="16" height="16" viewBox="0 0 16 16"><path d="M4.60 1.50 L5.54 3.91 L8.12 4.06 L6.12 5.69 L6.77 8.19 L4.60 6.80 L2.43 8.19 L3.08 5.69 L1.08 4.06 L3.66 3.91Z" fill="#f2a33a"/><path d="M7.4 7.4 L13.8 13.6" stroke="#2d4da0" stroke-width="1.7" stroke-dasharray="2.2 0.9"/></svg>
<svg style="left:856px;top:296px" width="16" height="16" viewBox="0 0 16 16"><path d="M4.60 1.50 L5.54 3.91 L8.12 4.06 L6.12 5.69 L6.77 8.19 L4.60 6.80 L2.43 8.19 L3.08 5.69 L1.08 4.06 L3.66 3.91Z" fill="#f2a33a"/><path d="M7.4 7.4 L13.8 13.6" stroke="#2d4da0" stroke-width="1.7" stroke-dasharray="2.2 0.9"/></svg>
<svg style="left:856px;top:312px" width="16" height="16" viewBox="0 0 16 16"><path d="M4.60 1.50 L5.54 3.91 L8.12 4.06 L6.12 5.69 L6.77 8.19 L4.60 6.80 L2.43 8.19 L3.08 5.69 L1.08 4.06 L3.66 3.91Z" fill="#f2a33a"/><path d="M7.4 7.4 L13.8 13.6" stroke="#2d4da0" stroke-width="1.7" stroke-dasharray="2.2 0.9"/></svg>
<svg style="left:856px;top:328px" width="16" height="16" viewBox="0 0 16 16"><path d="M4.60 1.50 L5.54 3.91 L8.12 4.06 L6.12 5.69 L6.77 8.19 L4.60 6.80 L2.43 8.19 L3.08 5.69 L1.08 4.06 L3.66 3.91Z" fill="#f2a33a"/><path d="M7.4 7.4 L13.8 13.6" stroke="#2d4da0" stroke-width="1.7" stroke-dasharray="2.2 0.9"/></svg>
<svg style="left:856px;top:344px" width="16" height="16" viewBox="0 0 16 16"><path d="M4.60 1.50 L5.54 3.91 L8.12 4.06 L6.12 5.69 L6.77 8.19 L4.60 6.80 L2.43 8.19 L3.08 5.69 L1.08 4.06 L3.66 3.91Z" fill="#f2a33a"/><path d="M7.4 7.4 L13.8 13.6" stroke="#2d4da0" stroke-width="1.7" stroke-dasharray="2.2 0.9"/></svg>
<svg style="left:856px;top:360px" width="16" height="16" viewBox="0 0 16 16"><path d="M4.60 1.50 L5.54 3.91 L8.12 4.06 L6.12 5.69 L6.77 8.19 L4.60 6.80 L2.43 8.19 L3.08 5.69 L1.08 4.06 L3.66 3.91Z" fill="#f2a33a"/><path d="M7.4 7.4 L13.8 13.6" stroke="#2d4da0" stroke-width="1.7" stroke-dasharray="2.2 0.9"/></svg>
<svg style="left:856px;top:376px" width="16" height="16" viewBox="0 0 16 16"><path d="M4.60 1.50 L5.54 3.91 L8.12 4.06 L6.12 5.69 L6.77 8.19 L4.60 6.80 L2.43 8.19 L3.08 5.69 L1.08 4.06 L3.66 3.91Z" fill="#f2a33a"/><path d="M7.4 7.4 L13.8 13.6" stroke="#2d4da0" stroke-width="1.7" stroke-dasharray="2.2 0.9"/></svg>
<svg style="left:856px;top:392px" width="16" height="16" viewBox="0 0 16 16"><path d="M4.60 1.50 L5.54 3.91 L8.12 4.06 L6.12 5.69 L6.77 8.19 L4.60 6.80 L2.43 8.19 L3.08 5.69 L1.08 4.06 L3.66 3.91Z" fill="#f2a33a"/><path d="M7.4 7.4 L13.8 13.6" stroke="#2d4da0" stroke-width="1.7" stroke-dasharray="2.2 0.9"/></svg>
<svg style="left:856px;top:408px" width="16" height="16" viewBox="0 0 16 16"><path d="M4.60 1.50 L5.54 3.91 L8.12 4.06 L6.12 5.69 L6.77 8.19 L4.60 6.80 L2.43 8.19 L3.08 5.69 L1.08 4.06 L3.66 3.91Z" fill="#f2a33a"/><path d="M7.4 7.4 L13.8 13.6" stroke="#2d4da0" stroke-width="1.7" stroke-dasharray="2.2 0.9"/></svg>
<svg style="left:856px;top:424px" width="16" height="16" viewBox="0 0 16 16"><path d="M4.60 1.50 L5.54 3.91 L8.12 4.06 L6.12 5.69 L6.77 8.19 L4.60 6.80 L2.43 8.19 L3.08 5.69 L1.08 4.06 L3.66 3.91Z" fill="#fff" stroke="#f2a33a" stroke-width="1.4"/><path d="M7.4 7.4 L13.8 13.6" stroke="#4a6fd0" stroke-width="1.7" stroke-dasharray="2.2 0.9"/></svg>

<svg id="viewer" style="left:47px;top:164px" width="769" height="591" viewBox="47 164 769 591" font-family="&quot;Liberation Sans&quot;,sans-serif">
<defs>
<linearGradient id="gRim" gradientUnits="userSpaceOnUse" x1="140" y1="450" x2="560" y2="380">
 <stop offset="0" stop-color="#efdb82"/><stop offset="0.25" stop-color="#f8ea96"/><stop offset="0.6" stop-color="#f6e68e"/><stop offset="0.85" stop-color="#d9c473"/><stop offset="1" stop-color="#9c8748"/></linearGradient>
<linearGradient id="gFace" gradientUnits="userSpaceOnUse" x1="150" y1="330" x2="560" y2="650">
 <stop offset="0" stop-color="#a9925b"/><stop offset="1" stop-color="#a48d55"/></linearGradient>
<linearGradient id="gHubWall" gradientUnits="userSpaceOnUse" x1="230" y1="0" x2="480" y2="0">
 <stop offset="0" stop-color="#c9b468"/><stop offset="0.12" stop-color="#e8d47e"/><stop offset="0.3" stop-color="#fff59e"/><stop offset="0.55" stop-color="#fdee98"/><stop offset="0.8" stop-color="#d2bb6b"/><stop offset="0.92" stop-color="#a38d4c"/><stop offset="1" stop-color="#64542a"/></linearGradient>
<linearGradient id="gShaft" gradientUnits="userSpaceOnUse" x1="262" y1="640" x2="345" y2="672">
 <stop offset="0" stop-color="#e8d47e"/><stop offset="0.28" stop-color="#fcf0a0"/><stop offset="0.55" stop-color="#e7d17d"/><stop offset="0.8" stop-color="#bca65f"/><stop offset="1" stop-color="#8d7840"/></linearGradient>
<linearGradient id="gSlotWall" gradientUnits="userSpaceOnUse" x1="0" y1="425" x2="0" y2="470">
 <stop offset="0" stop-color="#fff89e"/><stop offset="0.5" stop-color="#faec94"/><stop offset="1" stop-color="#e8d481"/></linearGradient>
<linearGradient id="gCone" gradientUnits="userSpaceOnUse" x1="262" y1="0" x2="372" y2="0">
 <stop offset="0" stop-color="#d9c575"/><stop offset="0.45" stop-color="#ecd987"/><stop offset="0.7" stop-color="#f8eba2"/><stop offset="1" stop-color="#f3e394"/></linearGradient>
<linearGradient id="gHole" gradientUnits="userSpaceOnUse" x1="-7.5" y1="-2.5" x2="2" y2="6">
 <stop offset="0" stop-color="#2e2610"/><stop offset="0.3" stop-color="#473b1b"/><stop offset="0.48" stop-color="#b39d58"/><stop offset="0.62" stop-color="#f5e48e"/><stop offset="1" stop-color="#f7e894"/></linearGradient>
<linearGradient id="gBossTop" gradientUnits="userSpaceOnUse" x1="385" y1="538" x2="402" y2="528">
 <stop offset="0" stop-color="#85713c"/><stop offset="1" stop-color="#a8915a"/></linearGradient>
<linearGradient id="gStrip" gradientUnits="userSpaceOnUse" x1="411" y1="560" x2="376" y2="621">
 <stop offset="0" stop-color="#fbefaa"/><stop offset="0.25" stop-color="#f3e08a"/><stop offset="1" stop-color="#e9d47e"/></linearGradient>
<linearGradient id="gSlotL" gradientUnits="userSpaceOnUse" x1="186" y1="479" x2="181" y2="518">
 <stop offset="0" stop-color="#fff793"/><stop offset="0.4" stop-color="#fbec90"/><stop offset="0.75" stop-color="#f0dc86"/><stop offset="1" stop-color="#dcc878"/></linearGradient>
<clipPath id="vclip"><rect x="47" y="164" width="769" height="591"/></clipPath>
</defs>
<g ><path d="M213.1 300.5 L283.2 316.3 L263.6 262.6Z" fill="#0000ff"/><ellipse cx="292.5" cy="286" rx="40.6" ry="31.5" transform="rotate(6 292.5 286)" fill="#0000ff"/><ellipse cx="292.5" cy="286" rx="37.4" ry="28.3" transform="rotate(6 292.5 286)" fill="#ffffff"/><text x="0" y="0" font-size="48" font-weight="400" text-anchor="middle" fill="#000" stroke="#000" stroke-width="0.5" transform="translate(288.5 289.5) rotate(-9) scale(1.2 1)" dominant-baseline="central">70</text></g>
<path d="M132.5 465.0 C134.3 451.7 138.8 426.7 145.0 410.0 C151.2 393.3 157.5 378.8 170.0 365.0 C182.5 351.2 203.3 336.5 220.0 327.5 C236.7 318.5 253.3 315.0 270.0 311.0 C286.7 307.0 303.3 304.5 320.0 303.7 C336.7 302.9 353.3 303.7 370.0 306.0 C386.7 308.3 405.7 313.7 420.0 317.5 C434.3 321.3 444.9 324.1 456.0 328.7 C467.1 333.3 476.8 338.9 486.5 345.0 C496.2 351.1 505.7 358.3 514.0 365.0 C522.3 371.7 532.0 379.9 536.5 385.0 C541.0 390.1 539.5 392.1 541.0 395.6 C545.7 405.4 550.0 413.3 555.0 425.0 C560.0 436.7 564.9 451.3 571.0 466.0 C577.1 480.7 584.9 497.3 591.8 513.0 C591.9 518.7 592.5 524.7 592.0 530.0 C591.5 535.3 590.5 538.7 588.7 545.0 C586.9 551.3 583.5 560.8 581.0 568.0 C578.5 575.2 577.4 580.5 573.7 588.0 C570.0 595.5 565.0 605.1 558.7 613.0 C552.4 620.9 544.3 628.8 536.0 635.5 C527.7 642.2 519.3 647.6 509.0 653.0 C498.7 658.4 486.2 664.2 474.0 668.0 C461.8 671.8 448.5 673.8 436.0 675.5 C423.5 677.2 414.2 677.6 399.0 678.0 C383.8 678.4 361.5 679.0 345.0 678.0 C328.5 677.0 313.7 672.8 300.0 672.0 C286.3 671.2 275.3 672.7 263.0 673.0 C258.0 662.0 253.0 651.0 248.0 640.0 C242.3 636.0 237.7 633.3 231.0 628.0 C224.3 622.7 215.5 614.8 208.0 608.0 C200.5 601.2 194.0 595.8 186.0 587.0 C178.0 578.2 166.7 565.4 160.0 555.0 C153.3 544.6 150.3 535.3 146.0 524.5 C141.7 513.7 136.2 499.9 134.0 490.0 C131.8 480.1 130.7 478.3 132.5 465.0Z" fill="url(#gRim)"/>
<path d="M134.5 470.0 C134.9 461.3 136.2 449.0 138.0 440.0 C139.8 431.0 141.1 424.6 145.0 416.0 C148.9 407.4 154.5 397.8 161.2 388.7 C167.9 379.6 175.2 369.5 185.0 361.2 C194.8 352.9 207.9 344.7 220.0 338.7 C232.1 332.7 246.6 328.1 257.3 325.0 C268.0 321.9 273.6 321.7 284.0 320.0 C294.4 318.3 305.7 315.0 320.0 315.0 C334.3 315.0 353.3 316.9 370.0 320.0 C386.7 323.1 405.7 329.4 420.0 333.7 C434.3 338.0 445.0 341.6 456.0 346.0 C467.0 350.4 476.7 354.7 486.0 360.0 C495.3 365.3 503.4 370.3 512.0 378.0 C520.6 385.7 529.0 396.7 537.5 406.0 C539.6 411.5 541.5 412.4 543.7 422.4 C546.0 432.4 547.5 454.1 551.0 466.0 C554.5 477.9 560.4 484.7 565.0 493.7 C569.6 502.7 574.1 511.2 578.7 520.0 C581.8 521.3 586.0 522.2 588.0 524.0 C590.0 525.8 591.0 527.5 591.0 531.0 C591.0 534.5 589.8 538.8 588.0 545.0 C586.2 551.2 582.9 560.8 580.4 568.0 C577.9 575.2 576.7 580.6 573.0 588.0 C569.3 595.4 564.3 604.8 558.0 612.6 C551.7 620.4 543.7 628.4 535.4 635.0 C527.1 641.6 518.6 647.1 508.4 652.5 C498.2 657.9 486.1 663.8 474.0 667.6 C461.9 671.4 448.5 673.5 436.0 675.2 C423.5 676.9 414.2 677.3 399.0 677.7 C383.8 678.1 361.5 678.7 345.0 677.7 C328.5 676.7 313.7 672.7 300.0 671.6 C286.3 670.5 275.3 671.2 263.0 671.0 C258.0 660.3 253.0 649.7 248.0 639.0 C242.0 635.5 236.8 633.6 230.0 628.5 C223.2 623.4 214.5 615.3 207.0 608.5 C199.5 601.7 193.0 596.3 185.0 587.5 C177.0 578.7 165.6 565.9 159.0 555.5 C152.4 545.1 149.4 535.6 145.5 525.0 C141.6 514.4 137.3 501.2 135.5 492.0 C133.7 482.8 134.1 478.7 134.5 470.0Z" fill="url(#gFace)"/>
<path d="M541.0 395.6 L555.0 425.0 L571.0 466.0 L591.8 513.0 L592.0 536.0 L586.0 532.0 L578.7 520.0 L570.0 507.4 L565.0 493.7 L551.0 466.0 L541.8 440.0 L540.0 432.4 L543.7 422.4 L537.5 406.0Z" fill="#3f3519"/>
<path d="M555.5 446.2 L560.0 447.0 L571.2 475.0 L566.2 493.7 L562.4 485.0 L551.8 460.6Z" fill="#1b74d8"/>
<clipPath id="hc"><path d="M555.5 446.2 L560.0 447.0 L571.2 475.0 L566.2 493.7 L562.4 485.0 L551.8 460.6Z"/></clipPath><path d="M549.0 456 L560.0 428 M550.4 460 L561.2 432 M551.8 464 L562.4 436 M553.2 468 L563.6 440 M554.6 472 L564.8 444 M556.0 476 L566.0 448 M557.4 480 L567.2 452 M558.8 484 L568.4 456 M560.2 488 L569.6 460 M561.6 492 L570.8 464 M563.0 496 L572.0 468 M564.4 500 L573.2 472 " stroke="#2a2a20" stroke-width="0.9" fill="none" clip-path="url(#hc)"/>
<path d="M579.0 515.0 L585.2 516.6 L586.8 523.6 L579.8 520.5Z" fill="#c8b268"/>
<path d="M136.2 482.8 L233.6 468.5 L222.0 512.0 L143.7 522.0 L134.4 500.0Z" fill="url(#gSlotL)"/>
<path d="M136.2 485.8 L233.6 471.8" stroke="#ffffff" stroke-width="6.5" fill="none"/>
<path d="M443.7 435.0 L541.0 422.4 L548.6 461.0 L471.0 472.4 L455.0 460.0 L440.0 447.4Z" fill="url(#gSlotWall)"/>
<path d="M444.5 438 L541.5 425.4" stroke="#ffffff" stroke-width="5.6" fill="none"/>
<path d="M443.7 436 L440 447.4 L455 461 L458 452Z" fill="#fff6c4"/>
<path d="M471.0 472.4 L548.6 461.0 L565.0 493.7 L573.7 503.0 L478.8 516.8 L474.0 490.0Z" fill="#b39e60"/>
<path d="M478.8 516.8 L573.7 503.0 L578.7 520.0 L482.0 536.0Z" fill="#857240"/>
<path d="M496.3 484.4 C497 496 505 502 514 501.8 L561.2 494.3 L563.7 490.6 L513 497 C505 497 499 492 496.3 484.4Z" fill="#f3e28c"/>
<ellipse cx="512" cy="485" rx="2.2" ry="1.8" fill="#f3e28c"/><ellipse cx="537" cy="481" rx="2.2" ry="1.8" fill="#f3e28c"/>
<g ><path d="M130.0 573.8 L192.9 589.6 L186.6 541.8Z" fill="#0000ff"/><ellipse cx="204.9" cy="563.6" rx="34" ry="27" transform="rotate(-8 204.9 563.6)" fill="#0000ff"/><ellipse cx="204.9" cy="563.6" rx="31.4" ry="24.4" transform="rotate(-8 204.9 563.6)" fill="#ffffff"/><text x="0" y="0" font-size="27" font-weight="400" text-anchor="middle" fill="#000" stroke="#000" stroke-width="0.4" transform="translate(209.4 563.6) rotate(-7) skewX(-16) scale(1.3 1)" dominant-baseline="central">150</text></g>
<path d="M219.0 527.0 C218.8 523.2 220.3 511.7 222.0 505.0 C223.7 498.3 226.4 492.9 229.0 487.0 C231.6 481.1 234.7 477.6 237.3 469.7 C239.9 461.8 241.1 448.1 244.8 439.8 C248.6 431.5 254.8 425.2 259.8 419.8 C264.8 414.4 269.0 410.6 274.8 407.3 C280.6 404.0 287.2 401.5 294.7 399.8 C302.2 398.1 312.8 397.9 319.7 397.3 C326.6 396.7 327.8 395.6 336.4 396.2 C345.0 396.8 359.3 397.9 371.4 401.2 C383.5 404.5 397.4 411.0 408.8 416.2 C420.2 421.4 432.3 427.4 440.0 432.4 C447.7 437.4 450.0 439.1 455.0 446.0 C460.0 452.9 465.8 465.0 470.0 474.0 C474.2 483.0 477.8 492.7 480.0 500.0 C482.2 507.3 487.4 513.8 483.0 518.0 C478.6 522.2 460.8 528.5 453.6 525.5 C446.4 522.5 445.0 507.1 440.0 500.0 C435.0 492.9 431.7 488.3 423.8 482.9 C415.9 477.4 403.0 471.5 392.7 467.3 C382.3 463.1 373.2 459.8 361.5 457.6 C349.8 455.3 334.2 453.6 322.5 453.7 C310.8 453.7 302.4 454.9 291.3 457.9 C280.3 461.0 266.0 465.7 256.3 472.0 C246.5 478.3 238.4 486.4 232.9 495.7 C227.3 505.1 225.4 522.9 223.1 528.1 C220.8 533.3 219.2 530.8 219.0 527.0Z" fill="url(#gHubWall)"/>
<path d="M244.8 439.8 C247.3 436.5 254.8 425.2 259.8 419.8 C264.8 414.4 269.0 410.6 274.8 407.3 C280.6 404.0 287.2 401.5 294.7 399.8 C302.2 398.1 312.8 397.9 319.7 397.3 C326.6 396.7 327.8 395.6 336.4 396.2 C345.0 396.8 359.3 397.9 371.4 401.2 C383.5 404.5 397.4 411.0 408.8 416.2 C420.2 421.4 432.3 427.4 440.0 432.4 C447.7 437.4 452.5 443.7 455.0 446.0" stroke="#fffbe4" stroke-width="3.6" fill="none" opacity="0.95"/>
<path d="M453.6 525.5 C452.4 531.1 460.6 537.6 462.7 543.6 C464.8 549.6 466.4 555.4 466.4 561.8 C466.4 568.2 464.8 575.4 462.7 581.8 C460.6 588.2 456.2 595.1 453.6 600.0 C451.0 604.9 448.1 609.0 447.3 611.0 C446.5 613.0 447.3 613.6 449.0 611.8 C450.7 610.0 454.2 605.0 457.3 600.0 C460.4 595.0 464.9 588.2 467.3 581.8 C469.7 575.4 470.1 567.3 471.8 561.8 C473.5 556.3 475.6 553.5 477.3 549.0 C479.0 544.5 480.9 539.9 481.8 534.5 C482.7 529.1 482.4 522.4 482.7 516.4 C478.5 514.3 474.2 512.1 470.0 510.0 C464.5 515.2 454.8 519.9 453.6 525.5Z" fill="#5f4f26"/>
<path d="M223.1 528.1 C224.9 520.7 227.3 505.1 232.9 495.7 C238.4 486.4 246.5 478.3 256.3 472.0 C266.0 465.7 280.3 461.0 291.3 457.9 C302.4 454.9 310.8 453.7 322.5 453.7 C334.2 453.6 349.8 455.3 361.5 457.6 C373.2 459.8 382.3 463.1 392.7 467.3 C403.0 471.5 415.9 477.4 423.8 482.9 C431.7 488.3 435.0 492.9 440.0 500.0 C445.0 507.1 449.8 518.2 453.6 525.5 C457.4 532.8 460.6 537.6 462.7 543.6 C464.8 549.6 466.4 555.4 466.4 561.8 C466.4 568.2 464.8 575.4 462.7 581.8 C460.6 588.2 456.2 595.1 453.6 600.0 C451.0 604.9 451.2 606.0 447.3 611.0 C443.4 616.0 441.2 623.5 430.0 630.0 C418.8 636.5 401.7 645.8 380.0 650.0 C358.3 654.2 319.7 659.2 300.0 655.0 C280.3 650.8 271.0 634.2 262.0 625.0 C253.0 615.8 251.0 608.3 246.0 600.0 C241.0 591.7 236.0 585.0 232.0 575.0 C228.0 565.0 223.5 547.8 222.0 540.0 C220.5 532.2 221.3 535.5 223.1 528.1Z" fill="#a8915a"/>
<path d="M223.1 526.9 C224.7 521.5 227.3 503.9 232.9 494.5 C238.4 485.2 246.5 477.1 256.3 470.8 C266.0 464.5 280.3 459.8 291.3 456.7 C302.4 453.7 310.8 452.5 322.5 452.5 C334.2 452.4 349.8 454.1 361.5 456.4 C373.2 458.6 382.3 461.9 392.7 466.1 C403.0 470.3 418.6 479.1 423.8 481.7" stroke="#fffef4" stroke-width="6.6" fill="none"/>
<path d="M453.6 525.5 C455.1 528.5 460.6 537.6 462.7 543.6 C464.8 549.6 466.4 555.4 466.4 561.8 C466.4 568.2 464.8 575.4 462.7 581.8 C460.6 588.2 456.2 595.1 453.6 600.0 C451.0 604.9 448.4 609.2 447.3 611.0" stroke="#c9b46a" stroke-width="1.4" fill="none"/>
<path d="M299.8 506 C310 500 352 498 372.2 509.9 L352.3 584.9 C340 574 290 568 258.7 582.4Z" fill="url(#gCone)"/>
<path d="M258.7 582.4 C290 568 340 574 352.3 584.9" stroke="#fbf0b0" stroke-width="2" fill="none"/>
<path d="M299.8 506.5 C310 500.5 350 498.5 372.2 510.5" stroke="#fffdf0" stroke-width="4.6" fill="none"/>
<path d="M372.6 511.4 L401.6 562.3 L421.3 557.1 L394.0 506.0Z" fill="url(#gBossTop)"/>
<path d="M372.2 511.2 L351.0 581.5 L368.4 622.5 L401.6 562.3Z" fill="#41371a"/>
<path d="M401.6 562.3 L421.3 557.1 L385.0 620.0 L368.4 622.5Z" fill="url(#gStrip)"/>
<path d="M421.3 557.1 L429.7 577.4 L426.0 632.0 L400.6 650.5 L385.0 620.0Z" fill="#4a3e1e"/>
<ellipse cx="416.8" cy="595.5" rx="2" ry="3" fill="#fff8d2" transform="rotate(22 416.8 595.5)"/>
<ellipse cx="408.9" cy="608.4" rx="2" ry="3" fill="#fff8d2" transform="rotate(22 408.9 608.4)"/>
<ellipse cx="401" cy="622.5" rx="2" ry="3" fill="#fff8d2" transform="rotate(22 401 622.5)"/>
<text x="0" y="0" font-size="11" fill="none" stroke="#d8c878" stroke-width="0.45" transform="translate(362.5 592) rotate(-72) scale(1.05 0.85)">JSY</text>
<path d="M356.2 590.5 L357.8 596" stroke="#d8c878" stroke-width="0.8"/>
<path d="M248.2 640.4 L263.2 672.8 L290.0 667.8 L271.9 637.9Z" fill="#b49e5e"/>
<path d="M248.2 640.4 L260.2 621.2 L271.9 637.9Z" fill="#f1de8a"/>
<path d="M259.4 727.8 L290.5 617 C295 609 310 605.5 322 606.3 C334 607 343.5 612 345.8 623 L345.5 637.9 L310.6 732.8 C309 746 300 756 285 756 C268 756 258 742 259.4 727.8Z" fill="url(#gShaft)"/>
<path d="M345.8 622 C349.5 628 349 640 343 647 L345.5 637.9Z" fill="#a38e50"/>
<ellipse cx="282" cy="737.5" rx="21" ry="16" transform="rotate(18 282 737.5)" fill="#c3ae63"/>
<ellipse cx="282" cy="737.5" rx="21" ry="16" transform="rotate(18 282 737.5)" fill="none" stroke="#e9d684" stroke-width="1.5"/>
<path d="M261.5 728.5 C266 718 294 715.5 306.5 728" stroke="#fff8c8" stroke-width="3" fill="none"/>
<path d="M294 614 C305 608 325 607.5 338 613.5" stroke="#fffbe0" stroke-width="3.5" fill="none" opacity="0.9"/>
<g transform="translate(298.5 354.5) rotate(0) scale(1.95)"><ellipse cx="0" cy="0" rx="8" ry="6.4" fill="url(#gHole)"/><ellipse cx="1.1" cy="-1.5" rx="6.5" ry="4.5" fill="#a8915a"/><ellipse cx="1.7" cy="-3.1" rx="4" ry="3.15" fill="#f4e38e"/><path d="M-2.3 -3.1 C-2.3 -5 -0.5 -6.25 1.7 -6.25 C0 -5.6 -1.1 -4.2 -0.9 -1.6 C-1.8 -1.9 -2.3 -2.5 -2.3 -3.1Z" fill="#4a3e1c"/><path d="M-0.2 -5.9 C2.6 -6.9 5.2 -5.6 5.6 -4 C4 -4.2 1.5 -4.6 -0.2 -5.9Z" fill="#ffffff"/></g>
<g transform="translate(392 361) rotate(0) scale(1.95)"><ellipse cx="0" cy="0" rx="8" ry="6.4" fill="url(#gHole)"/><ellipse cx="1.1" cy="-1.5" rx="6.5" ry="4.5" fill="#a8915a"/><ellipse cx="1.7" cy="-3.1" rx="4" ry="3.15" fill="#f4e38e"/><path d="M-2.3 -3.1 C-2.3 -5 -0.5 -6.25 1.7 -6.25 C0 -5.6 -1.1 -4.2 -0.9 -1.6 C-1.8 -1.9 -2.3 -2.5 -2.3 -3.1Z" fill="#4a3e1c"/><path d="M-0.2 -5.9 C2.6 -6.9 5.2 -5.6 5.6 -4 C4 -4.2 1.5 -4.6 -0.2 -5.9Z" fill="#ffffff"/></g>
<g transform="translate(475 404.5) rotate(0) scale(1.95)"><ellipse cx="0" cy="0" rx="8" ry="6.4" fill="url(#gHole)"/><ellipse cx="1.1" cy="-1.5" rx="6.5" ry="4.5" fill="#a8915a"/><ellipse cx="1.7" cy="-3.1" rx="4" ry="3.15" fill="#f4e38e"/><path d="M-2.3 -3.1 C-2.3 -5 -0.5 -6.25 1.7 -6.25 C0 -5.6 -1.1 -4.2 -0.9 -1.6 C-1.8 -1.9 -2.3 -2.5 -2.3 -3.1Z" fill="#4a3e1c"/><path d="M-0.2 -5.9 C2.6 -6.9 5.2 -5.6 5.6 -4 C4 -4.2 1.5 -4.6 -0.2 -5.9Z" fill="#ffffff"/></g>
<g transform="translate(537.5 545) rotate(0) scale(1.95)"><ellipse cx="0" cy="0" rx="8" ry="6.4" fill="url(#gHole)"/><ellipse cx="1.1" cy="-1.5" rx="6.5" ry="4.5" fill="#a8915a"/><ellipse cx="1.7" cy="-3.1" rx="4" ry="3.15" fill="#f4e38e"/><path d="M-2.3 -3.1 C-2.3 -5 -0.5 -6.25 1.7 -6.25 C0 -5.6 -1.1 -4.2 -0.9 -1.6 C-1.8 -1.9 -2.3 -2.5 -2.3 -3.1Z" fill="#4a3e1c"/><path d="M-0.2 -5.9 C2.6 -6.9 5.2 -5.6 5.6 -4 C4 -4.2 1.5 -4.6 -0.2 -5.9Z" fill="#ffffff"/></g>
<g transform="translate(497 605) rotate(0) scale(1.95)"><ellipse cx="0" cy="0" rx="8" ry="6.4" fill="url(#gHole)"/><ellipse cx="1.1" cy="-1.5" rx="6.5" ry="4.5" fill="#a8915a"/><ellipse cx="1.7" cy="-3.1" rx="4" ry="3.15" fill="#f4e38e"/><path d="M-2.3 -3.1 C-2.3 -5 -0.5 -6.25 1.7 -6.25 C0 -5.6 -1.1 -4.2 -0.9 -1.6 C-1.8 -1.9 -2.3 -2.5 -2.3 -3.1Z" fill="#4a3e1c"/><path d="M-0.2 -5.9 C2.6 -6.9 5.2 -5.6 5.6 -4 C4 -4.2 1.5 -4.6 -0.2 -5.9Z" fill="#ffffff"/></g>
<g transform="translate(221 387) rotate(0) scale(1.95)"><ellipse cx="0" cy="0" rx="8" ry="6.4" fill="url(#gHole)"/><ellipse cx="1.1" cy="-1.5" rx="6.5" ry="4.5" fill="#a8915a"/><ellipse cx="1.7" cy="-3.1" rx="4" ry="3.15" fill="#f4e38e"/><path d="M-2.3 -3.1 C-2.3 -5 -0.5 -6.25 1.7 -6.25 C0 -5.6 -1.1 -4.2 -0.9 -1.6 C-1.8 -1.9 -2.3 -2.5 -2.3 -3.1Z" fill="#4a3e1c"/><path d="M-0.2 -5.9 C2.6 -6.9 5.2 -5.6 5.6 -4 C4 -4.2 1.5 -4.6 -0.2 -5.9Z" fill="#ffffff"/></g>
<g transform="translate(181 449) rotate(0) scale(1.95)"><ellipse cx="0" cy="0" rx="8" ry="6.4" fill="url(#gHole)"/><ellipse cx="1.1" cy="-1.5" rx="6.5" ry="4.5" fill="#a8915a"/><ellipse cx="1.7" cy="-3.1" rx="4" ry="3.15" fill="#f4e38e"/><path d="M-2.3 -3.1 C-2.3 -5 -0.5 -6.25 1.7 -6.25 C0 -5.6 -1.1 -4.2 -0.9 -1.6 C-1.8 -1.9 -2.3 -2.5 -2.3 -3.1Z" fill="#4a3e1c"/><path d="M-0.2 -5.9 C2.6 -6.9 5.2 -5.6 5.6 -4 C4 -4.2 1.5 -4.6 -0.2 -5.9Z" fill="#ffffff"/></g>
<path d="M228.5 584 C228 592 233 600 243 602.5 C250 603 254 600 256 597 C250 599 243 598 238 594.5 C233 591 231 587 231.5 583Z" fill="#f0dd88"/>
<path d="M228.5 584 C227 590 230 598 238 602 C232 597 229.5 590 231.5 583Z" fill="#8a7740"/>
<path d="M404 648 C408 653 416 655 424 651 C428 649 430 646 430.5 643 C427 646.5 420 648.5 413 648 C409 648 406 648.5 404 648Z" fill="#f0dd88"/>
<path d="M591.8 513.0 L592.3 530.0 L589.0 546.0 L583.0 564.0 L579.0 574.0 L585.5 553.0 L589.0 538.0 L589.5 524.0 L588.0 516.0Z" fill="#4a3e1e"/>
<path d="M157.0 549.5 L183.0 548.0 L172.0 555.0 L160.0 555.5Z" fill="#f3e28c"/>
<path d="M393.7 198.7 L359.6 302.0" stroke="#3b2b2b" stroke-width="0.9" fill="none"/>
<path d="M394.3 214.0 L393.5 256.0 L392.0 310.0" stroke="#3b2b2b" stroke-width="0.9" fill="none"/>
<path d="M404.9 199.3 L465.0 336.0" stroke="#3b2b2b" stroke-width="0.9" fill="none"/>
<path d="M386.0 286.0 L321.8 434.6" stroke="#221a1a" stroke-width="1.0" fill="none"/>
<path d="M319 434 L324.5 434 L323.5 436.2 L320 436.2Z" fill="#111"/>
<path d="M392.0 282.0 L392.0 312.0" stroke="#3b2b2b" stroke-width="0.9" fill="none"/>
<path d="M395.8 200.5 L399.8 199.2 L402.6 214.5 L398.4 216.0Z" fill="#fff" stroke="#3b2b2b" stroke-width="0.8"/>
<text font-size="8.5" font-weight="700" font-style="italic" fill="#111" textLength="48" lengthAdjust="spacingAndGlyphs" transform="translate(412 273) rotate(-71)">.030 ±.005</text>
<text font-size="9" fill="#111" font-style="italic" transform="translate(431.5 218) rotate(-71)">⌀</text>
<g transform="translate(116.6 309.8) rotate(-8.4)"><rect x="0" y="0" width="59.8" height="10.4" fill="#fff" stroke="#3b2b2b" stroke-width="0.9"/><text x="8.4" y="5.2" font-size="6.8" font-weight="700" text-anchor="middle" dominant-baseline="central" fill="#111" font-style="italic">↗</text><path d="M16.8 0 V10.4" stroke="#3b2b2b" stroke-width="0.9"/><text x="27.5" y="5.2" font-size="6.8" font-weight="700" text-anchor="middle" dominant-baseline="central" fill="#111" font-style="italic">.026</text><path d="M38.3 0 V10.4" stroke="#3b2b2b" stroke-width="0.9"/><text x="49.1" y="5.2" font-size="6.8" font-weight="700" text-anchor="middle" dominant-baseline="central" fill="#111" font-style="italic">A-B</text></g>
<path d="M182.0 304.5 L189.7 304.5 L223.0 330.0" stroke="#3b2b2b" stroke-width="0.9" fill="none"/>
<path d="M555.0 396.0 L554.5 426.0" stroke="#3b2b2b" stroke-width="0.9" fill="none"/>
<ellipse cx="559.3" cy="383.6" rx="5.4" ry="13" fill="#fff" stroke="#3b2b2b" stroke-width="0.9" transform="rotate(-9 559.3 383.6)"/>
<path d="M556.5 372.0 L562.0 394.0" stroke="#3b2b2b" stroke-width="0.8" fill="none"/>
<text font-size="6.5" font-weight="700" fill="#111" transform="translate(565 394) rotate(-75)">G</text>
<path d="M571.0 402.0 L559.0 440.0" stroke="#3b2b2b" stroke-width="0.9" fill="none"/>
<path d="M571.0 402.0 L585.0 433.0" stroke="#3b2b2b" stroke-width="0.9" fill="none"/>
<path d="M585.0 433.0 L572.0 470.0" stroke="#3b2b2b" stroke-width="0.9" fill="none"/>
<path d="M598.0 436.0 L584.0 474.0" stroke="#3b2b2b" stroke-width="0.9" fill="none"/>
<path d="M575.0 408.0 L579.5 406.0 L584.0 428.0 L579.0 431.0Z" fill="#fff" stroke="#3b2b2b" stroke-width="0.8"/>
<path d="M589.0 437.0 L593.5 435.0 L597.0 455.0 L592.0 459.0Z" fill="#fff" stroke="#3b2b2b" stroke-width="0.8"/>
<text font-size="5" font-weight="700" fill="#111" transform="translate(582 427) rotate(-72)">.XXX</text>
<text font-size="5" font-weight="700" fill="#111" transform="translate(595.5 455) rotate(-72)">.XXX</text>
<ellipse cx="523.5" cy="486.8" rx="2.4" ry="1.4" fill="#111"/>
<path d="M589.7 541.9 L627.3 549.8 L632.2 548.4" stroke="#3b2b2b" stroke-width="0.9" fill="none"/>
<g transform="translate(631.2 543.9) rotate(-8.7)"><rect x="0" y="0" width="59.1" height="10.1" fill="#fff" stroke="#3b2b2b" stroke-width="0.9"/><text x="8.9" y="5.1" font-size="6.8" font-weight="700" text-anchor="middle" dominant-baseline="central" fill="#111" font-style="italic">↗</text><path d="M17.7 0 V10.1" stroke="#3b2b2b" stroke-width="0.9"/><text x="28.4" y="5.1" font-size="6.8" font-weight="700" text-anchor="middle" dominant-baseline="central" fill="#111" font-style="italic">.025</text><path d="M39.0 0 V10.1" stroke="#3b2b2b" stroke-width="0.9"/><text x="49.0" y="5.1" font-size="6.8" font-weight="700" text-anchor="middle" dominant-baseline="central" fill="#111" font-style="italic">A-B</text></g>
<path d="M523.8 486.9 L591.7 513.2 L708.4 559.7" stroke="#2a1c1c" stroke-width="1.0" fill="none"/>
<g transform="translate(713.3 554.8) rotate(-9.0)"><rect x="0" y="0" width="66.1" height="10.4" fill="#fff" stroke="#3b2b2b" stroke-width="0.9"/><text x="12.2" y="5.2" font-size="7.5" font-weight="700" text-anchor="middle" dominant-baseline="central" fill="#111" font-style="italic">⊥</text><path d="M24.5 0 V10.4" stroke="#3b2b2b" stroke-width="0.9"/><text x="38.0" y="5.2" font-size="7.5" font-weight="700" text-anchor="middle" dominant-baseline="central" fill="#111" font-style="italic">.010</text><path d="M51.6 0 V10.4" stroke="#3b2b2b" stroke-width="0.9"/><text x="58.8" y="5.2" font-size="7.5" font-weight="700" text-anchor="middle" dominant-baseline="central" fill="#111" font-style="italic">C</text></g>
<ellipse cx="112" cy="541.8" rx="8" ry="5" fill="#fff" stroke="#3b2b2b" stroke-width="0.8" transform="rotate(-8 112 541.8)"/>
<text font-size="6.5" fill="#111" transform="translate(106.5 544.5) rotate(-8)">T3</text>
<ellipse cx="122" cy="559" rx="4" ry="11" fill="none" stroke="#3b2b2b" stroke-width="0.8" transform="rotate(8 122 559)"/>
<text font-size="10" fill="#111" font-weight="700" transform="translate(128.5 541.5) rotate(-7)">800.± 000.3</text>
<path d="M193.3 530.5 L215.7 526.8 L335.6 508.0" stroke="#2a1c1c" stroke-width="1.0" fill="none"/>
<ellipse cx="216" cy="526.7" rx="2.5" ry="1.3" fill="#111"/><ellipse cx="321" cy="510.3" rx="2.5" ry="1.3" fill="#111"/>
<path d="M106.0 576.7 L189.5 534.3" stroke="#3b2b2b" stroke-width="0.9" fill="none"/>
<path d="M112.0 546.0 L122.0 570.0 L140.0 600.0" stroke="#3b2b2b" stroke-width="0.9" fill="none"/>
<path d="M140.0 528.0 L122.0 548.0 L118.0 570.0" stroke="#3b2b2b" stroke-width="0.9" fill="none"/>
<path d="M121.0 571.7 L110.0 577.0 L99.7 579.2" stroke="#3b2b2b" stroke-width="0.9" fill="none"/>
<g transform="translate(48.5 585.5) rotate(-12.8)"><rect x="0" y="0" width="48.7" height="7.8" fill="#fff" stroke="#3b2b2b" stroke-width="0.9"/><text x="15.1" y="3.9" font-size="7.5" font-weight="700" text-anchor="middle" dominant-baseline="central" fill="#111" font-style="italic">.010</text><path d="M30.2 0 V7.8" stroke="#3b2b2b" stroke-width="0.9"/><text x="39.5" y="3.9" font-size="7.5" font-weight="700" text-anchor="middle" dominant-baseline="central" fill="#111" font-style="italic">D</text></g>
<path d="M139.0 574.0 L144.5 576.0 L142.0 598.0 L136.5 595.0Z" fill="#fff" stroke="#3b2b2b" stroke-width="0.8"/>
<path d="M151.0 600.0 L156.5 602.0 L153.0 628.0 L147.5 625.0Z" fill="#fff" stroke="#3b2b2b" stroke-width="0.8"/>
<path d="M163.0 585.0 L154.0 608.0" stroke="#3b2b2b" stroke-width="0.9" fill="none"/>
<path d="M216.0 527.0 L256.0 612.0" stroke="#2a1c1c" stroke-width="0.9" fill="none"/>
<path d="M321.0 510.0 L352.0 585.0" stroke="#2a1c1c" stroke-width="0.9" fill="none"/>
<path d="M256.0 604.0 L300.0 582.0" stroke="#2a1c1c" stroke-width="0.9" fill="none"/>
<path d="M252.0 589.0 L258.0 592.0 L250.0 625.0 L244.0 621.0Z" fill="none" stroke="#3b2b2b" stroke-width="0.9"/>
<path d="M268.0 632.0 L273.0 640.0 L270.0 653.0 L265.0 645.0Z" fill="none" stroke="#3b2b2b" stroke-width="0.9"/>
<path d="M270.0 648.0 L287.6 684.0" stroke="#2a1c1c" stroke-width="0.9" fill="none"/>
<path d="M287.8 684.5 L284.6 680 L288.6 679Z" fill="#111"/>
<path d="M314.3 697.8 L345.0 705.0 L374.0 708.5" stroke="#3b2b2b" stroke-width="0.9" fill="none"/>
<ellipse cx="314.5" cy="697.8" rx="2" ry="1.3" fill="#111"/>
<g transform="translate(370.3 702.3) rotate(-7.8)"><rect x="0" y="0" width="51.9" height="12.1" fill="#fff" stroke="#3b2b2b" stroke-width="0.9"/><ellipse cx="11.9" cy="6.1" rx="5.5" ry="3.9" fill="none" stroke="#3b2b2b" stroke-width="0.9"/><path d="M23.9 0 V12.1" stroke="#3b2b2b" stroke-width="0.9"/><text x="37.9" y="6.1" font-size="8" font-weight="700" text-anchor="middle" dominant-baseline="central" fill="#111" font-style="italic">.005</text></g>
<path d="M409.0 690.0 L415.0 692.0 L402.0 756.0 L396.0 752.0Z" fill="none" stroke="#3b2b2b" stroke-width="0.9"/>
<path d="M421.4 648 C420 665 419 678 415 690" stroke="#3b2b2b" stroke-width="0.9" fill="none"/>
<text font-size="5" font-weight="700" font-style="italic" fill="#111" transform="translate(143.2 596) rotate(-78)">.XXX</text>
<text font-size="5" font-weight="700" font-style="italic" fill="#111" transform="translate(155 626) rotate(-80)">.XXX</text>
<text font-size="5.5" font-weight="700" font-style="italic" fill="#111" transform="translate(254 606) rotate(-72)">.005</text>
<text font-size="5" font-weight="700" font-style="italic" fill="#111" transform="translate(271 650) rotate(-65)">A</text>
<text font-size="6" font-weight="700" font-style="italic" fill="#111" transform="translate(121 562) rotate(-80)">A</text>
<text font-size="5.5" font-weight="700" font-style="italic" fill="#111" transform="translate(407 740) rotate(-78)">.005 A-B</text>
<text font-size="4.5" font-weight="700" font-style="italic" fill="#111" transform="translate(399 210) rotate(-78)">.XX</text>
<g ><path d="M119.1 530.5 L109.1 465.1 L89.9 499.5Z" fill="#0000ff"/><ellipse cx="92.2" cy="464.4" rx="16.5" ry="40.5" transform="rotate(-11 92.2 464.4)" fill="#0000ff"/><ellipse cx="92.2" cy="464.4" rx="13.9" ry="37.9" transform="rotate(-11 92.2 464.4)" fill="#ffffff"/><text x="0" y="0" font-size="48" font-weight="400" text-anchor="middle" fill="#000" stroke="#000" stroke-width="1.0" transform="translate(92.2 464.4) rotate(-11) scale(0.407 1) rotate(-111) scale(1.0 1)" dominant-baseline="central">90</text></g>
<g ><path d="M449.0 311.0 L474.5 297.9 L449.4 247.1Z" fill="#0000ff"/><ellipse cx="467" cy="257.5" rx="17" ry="41.5" transform="rotate(-7 467 257.5)" fill="#0000ff"/><ellipse cx="467" cy="257.5" rx="14.4" ry="38.9" transform="rotate(-7 467 257.5)" fill="#ffffff"/><text x="0" y="0" font-size="39" font-weight="400" text-anchor="middle" fill="#000" stroke="#000" stroke-width="1.0" transform="translate(466 260.5) rotate(-7) scale(0.410 1) rotate(-35) scale(1.0 1)" dominant-baseline="central">160</text></g>
<g ><path d="M504.0 268.7 L572.5 288.7 L557.1 231.2Z" fill="#0000ff"/><ellipse cx="584" cy="257.2" rx="40.3" ry="33.3" transform="rotate(8 584 257.2)" fill="#0000ff"/><ellipse cx="584" cy="257.2" rx="37.3" ry="30.299999999999997" transform="rotate(8 584 257.2)" fill="#ffffff"/><text x="0" y="0" font-size="43.5" font-weight="400" text-anchor="middle" fill="#000" stroke="#000" stroke-width="0.5" transform="translate(582 258.2) rotate(-7) scale(1.31 1)" dominant-baseline="central">80</text></g>
<g ><path d="M555.0 371.0 L543.2 304.6 L525.3 342.8Z" fill="#0000ff"/><ellipse cx="527.7" cy="308.7" rx="16" ry="38" transform="rotate(-9 527.7 308.7)" fill="#0000ff"/><ellipse cx="527.7" cy="308.7" rx="13.4" ry="35.4" transform="rotate(-9 527.7 308.7)" fill="#ffffff"/><text x="0" y="0" font-size="40" font-weight="400" text-anchor="middle" fill="#000" stroke="#000" stroke-width="1.0" transform="translate(527.7 308.7) rotate(-9) scale(0.421 1) rotate(-114) scale(1.0 1)" dominant-baseline="central">130</text></g>
<g ><path d="M602.5 412.7 L628.5 399.0 L602.1 345.7Z" fill="#0000ff"/><ellipse cx="619.8" cy="358.2" rx="16.6" ry="42" transform="rotate(-9 619.8 358.2)" fill="#0000ff"/><ellipse cx="619.8" cy="358.2" rx="14.000000000000002" ry="39.4" transform="rotate(-9 619.8 358.2)" fill="#ffffff"/><text x="0" y="0" font-size="36" font-weight="400" text-anchor="middle" fill="#000" stroke="#000" stroke-width="1.0" transform="translate(619.8 360.2) rotate(-9) scale(0.395 1) rotate(-36) scale(1.0 1)" dominant-baseline="central">170</text></g>
<g ><path d="M265.6 566.0 L289.6 550.6 L266.5 505.3Z" fill="#0000ff"/><ellipse cx="283.6" cy="511" rx="17" ry="41" transform="rotate(-3 283.6 511)" fill="#0000ff"/><ellipse cx="283.6" cy="511" rx="14.4" ry="38.4" transform="rotate(-3 283.6 511)" fill="#ffffff"/><text x="0" y="0" font-size="38" font-weight="400" text-anchor="middle" fill="#000" stroke="#000" stroke-width="1.0" transform="translate(283.6 511) rotate(-3) scale(0.415 1) rotate(-42) scale(1.0 1)" dominant-baseline="central">100</text></g>
<g ><path d="M361.2 505.0 L430.3 524.6 L414.4 467.6Z" fill="#0000ff"/><ellipse cx="441.4" cy="493.3" rx="40.3" ry="33" transform="rotate(8 441.4 493.3)" fill="#0000ff"/><ellipse cx="441.4" cy="493.3" rx="37.3" ry="30" transform="rotate(8 441.4 493.3)" fill="#ffffff"/><text x="0" y="0" font-size="32.5" font-weight="400" text-anchor="middle" fill="#000" stroke="#000" stroke-width="0.7" transform="translate(440.4 493.8) rotate(-10) scale(1.26 1)" dominant-baseline="central">120</text></g>
<g ><path d="M422.7 671.7 L449.3 656.1 L422.7 603.2Z" fill="#0000ff"/><ellipse cx="440" cy="617" rx="16" ry="40.5" transform="rotate(-10 440 617)" fill="#0000ff"/><ellipse cx="440" cy="617" rx="13.4" ry="37.9" transform="rotate(-10 440 617)" fill="#ffffff"/><text x="0" y="0" font-size="38" font-weight="400" text-anchor="middle" fill="#000" stroke="#000" stroke-width="1.0" transform="translate(440 617) rotate(-10) scale(0.395 1) rotate(-38) scale(1.0 1)" dominant-baseline="central">200</text></g>
<path d="M430.5 576.0 L438.9 593.7 L447.3 608.9 L459.0 610.0 L462.0 572.0Z" fill="#a8915a"/>
<clipPath id="c200"><rect x="428" y="566" width="40" height="56"/></clipPath>
<path d="M453.6 525.5 C452.4 531.1 460.6 537.6 462.7 543.6 C464.8 549.6 466.4 555.4 466.4 561.8 C466.4 568.2 464.8 575.4 462.7 581.8 C460.6 588.2 456.2 595.1 453.6 600.0 C451.0 604.9 448.1 609.0 447.3 611.0 C446.5 613.0 447.3 613.6 449.0 611.8 C450.7 610.0 454.2 605.0 457.3 600.0 C460.4 595.0 464.9 588.2 467.3 581.8 C469.7 575.4 470.1 567.3 471.8 561.8 C473.5 556.3 475.6 553.5 477.3 549.0 C479.0 544.5 480.9 539.9 481.8 534.5 C482.7 529.1 482.4 522.4 482.7 516.4 C478.5 514.3 474.2 512.1 470.0 510.0 C464.5 515.2 454.8 519.9 453.6 525.5Z" fill="#5f4f26" clip-path="url(#c200)"/>
<g ><path d="M456.2 695.8 L526.0 715.2 L510.2 658.1Z" fill="#0000ff"/><ellipse cx="536.8" cy="683.9" rx="40" ry="32.9" transform="rotate(8 536.8 683.9)" fill="#0000ff"/><ellipse cx="536.8" cy="683.9" rx="37" ry="29.9" transform="rotate(8 536.8 683.9)" fill="#ffffff"/><text x="0" y="0" font-size="32" font-weight="400" text-anchor="middle" fill="#000" stroke="#000" stroke-width="0.7" transform="translate(535.5 683.9) rotate(-10) scale(1.28 1)" dominant-baseline="central">180</text></g>
<g ><path d="M727.0 534.0 L793.4 554.0 L778.0 496.8Z" fill="#0000ff"/><ellipse cx="805.3" cy="522.5" rx="40.3" ry="33.4" transform="rotate(8 805.3 522.5)" fill="#0000ff"/><ellipse cx="805.3" cy="522.5" rx="37.3" ry="30.4" transform="rotate(8 805.3 522.5)" fill="#ffffff"/><text x="0" y="0" font-size="32.5" font-weight="400" text-anchor="middle" fill="#000" stroke="#000" stroke-width="0.7" transform="translate(805.3 520.5) rotate(-10) scale(1.26 1)" dominant-baseline="central">210</text></g>
<g transform="translate(387.1 280.0) rotate(-7.7)"><rect x="0" y="0" width="82.4" height="11.9" fill="none" stroke="#3b2b2b" stroke-width="0.9"/><text x="11.5" y="5.9" font-size="10" text-anchor="middle" dominant-baseline="central" fill="#111" font-style="italic">◎</text><path d="M23.1 0 V11.9" stroke="#3b2b2b" stroke-width="0.9"/><text x="44.5" y="5.9" font-size="10" text-anchor="middle" dominant-baseline="central" fill="#111" font-style="italic">⌀ .030</text><path d="M65.9 0 V11.9" stroke="#3b2b2b" stroke-width="0.9"/><text x="74.2" y="5.9" font-size="10" text-anchor="middle" dominant-baseline="central" fill="#111" font-style="italic">A</text></g>
</svg>
</body></html>
